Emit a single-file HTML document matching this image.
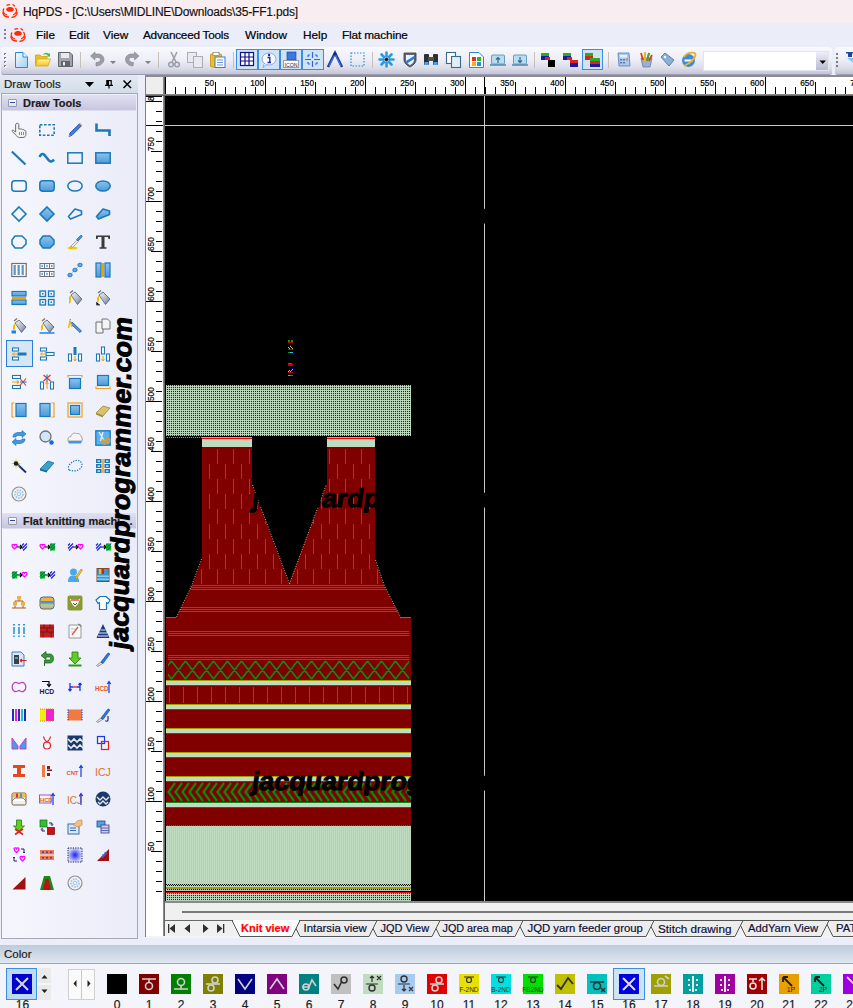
<!DOCTYPE html><html><head><meta charset="utf-8"><style>
html,body{margin:0;padding:0;width:853px;height:1008px;overflow:hidden;background:#ebedf9;font-family:"Liberation Sans",sans-serif;position:relative}
.ab{position:absolute;}
.t{position:absolute;white-space:nowrap;line-height:1;font-family:"Liberation Sans",sans-serif;-webkit-text-stroke:0.2px currentColor;}
svg{position:absolute;overflow:visible;}

</style></head><body>
<div class="ab" style="left:0;top:0;width:853px;height:23px;background:#f8eef2"></div>
<div class="t" style="left:23px;top:6px;font-size:12px;letter-spacing:-0.18px;color:#111;-webkit-text-stroke:0.15px #111">HqPDS - [C:\Users\MIDLINE\Downloads\35-FF1.pds]</div>
<svg class="ab" style="left:1px;top:4px" width="17" height="14"><path d="M5.5 4.5C7 2.5 11 2.5 12.5 4.5C13.5 6 12 7.8 9 7.8C6 7.8 4.5 6.2 5.5 4.5Z" fill="#ff2a00"/><path d="M3 4.5C1 7 2.5 10 6 11M14.5 4C16.5 6.5 15.5 9.5 12 11M2 8C1.5 11 4 13 8 13M16 8C16.5 11 14 13 10.5 13.5M5.5 1.5C6.5 0.8 8 0.5 9 0.8M11.5 0.5C12.5 1 13.5 1.5 14 2.5" stroke="#ff2a00" stroke-width="1.3" fill="none"/></svg>
<div class="ab" style="left:0;top:23px;width:853px;height:24px;background:#ebedf9"></div>
<div class="ab" style="left:10px;top:27px;width:15px;height:15px;background:#f0e8f2"></div>
<svg class="ab" style="left:9px;top:28px" width="17" height="14"><path d="M5.5 4.5C7 2.5 11 2.5 12.5 4.5C13.5 6 12 7.8 9 7.8C6 7.8 4.5 6.2 5.5 4.5Z" fill="#ff2a00"/><path d="M3 4.5C1 7 2.5 10 6 11M14.5 4C16.5 6.5 15.5 9.5 12 11M2 8C1.5 11 4 13 8 13M16 8C16.5 11 14 13 10.5 13.5M5.5 1.5C6.5 0.8 8 0.5 9 0.8M11.5 0.5C12.5 1 13.5 1.5 14 2.5" stroke="#ff2a00" stroke-width="1.3" fill="none"/></svg>
<svg class="ab" style="left:0;top:0" width="10" height="46"><g fill="#808090"><rect x="4" y="29" width="2" height="2"/><rect x="4" y="33" width="2" height="2"/><rect x="4" y="37" width="2" height="2"/></g></svg>
<div class="t" style="left:36px;top:30px;font-size:11.8px;letter-spacing:0px;color:#000;-webkit-text-stroke:0.2px #000">File</div>
<div class="t" style="left:69px;top:30px;font-size:11.8px;letter-spacing:0px;color:#000;-webkit-text-stroke:0.2px #000">Edit</div>
<div class="t" style="left:103px;top:30px;font-size:11.8px;letter-spacing:0px;color:#000;-webkit-text-stroke:0.2px #000">View</div>
<div class="t" style="left:143px;top:30px;font-size:11.8px;letter-spacing:-0.25px;color:#000;-webkit-text-stroke:0.2px #000">Advanceed Tools</div>
<div class="t" style="left:245px;top:30px;font-size:11.8px;letter-spacing:0px;color:#000;-webkit-text-stroke:0.2px #000">Window</div>
<div class="t" style="left:303px;top:30px;font-size:11.8px;letter-spacing:0px;color:#000;-webkit-text-stroke:0.2px #000">Help</div>
<div class="t" style="left:342px;top:30px;font-size:11.8px;letter-spacing:-0.15px;color:#000;-webkit-text-stroke:0.2px #000">Flat machine</div>
<div class="ab" style="left:1px;top:47px;width:831px;height:27px;border-radius:3px;background:linear-gradient(#f8f9fd,#eeeff7 45%,#dcdde9 78%,#c3c4d7);border-bottom:1px solid #9c9db4"></div>
<div class="ab" style="left:703px;top:51px;width:126px;height:20px;background:#fff;border:1px solid #e4e4ee;box-sizing:border-box"></div>
<div class="ab" style="left:835px;top:47px;width:18px;height:27px;border-radius:3px 0 0 3px;background:linear-gradient(#f8f9fd,#eeeff7 45%,#dcdde9 78%,#c3c4d7);border-bottom:1px solid #9c9db4"></div>
<svg class="ab" style="left:0;top:0" width="853" height="80">
<defs>
<linearGradient id="lf" x1="0" y1="0" x2="0" y2="1"><stop offset="0" stop-color="#8cc4ee"/><stop offset="1" stop-color="#4b9ada"/></linearGradient>
<linearGradient id="gb" x1="0" y1="0" x2="1" y2="1"><stop offset="0" stop-color="#f0f4f8"/><stop offset="0.6" stop-color="#a8b4c4"/><stop offset="1" stop-color="#5a6a80"/></linearGradient>
<radialGradient id="rg"><stop offset="0" stop-color="#2020f0"/><stop offset="1" stop-color="#d0d8f8"/></radialGradient>
</defs>
<defs>
<linearGradient id="doc" x1="0" y1="0" x2="1" y2="1"><stop offset="0" stop-color="#f4fbff"/><stop offset="1" stop-color="#9fd0f4"/></linearGradient>
<linearGradient id="ddb" x1="0" y1="0" x2="0" y2="1"><stop offset="0" stop-color="#eceef8"/><stop offset="1" stop-color="#b8bad0"/></linearGradient>
<linearGradient id="fold" x1="0" y1="0" x2="0" y2="1"><stop offset="0" stop-color="#fff6a0"/><stop offset="1" stop-color="#f0c020"/></linearGradient>
</defs>
<g fill="#7a7a8a"><rect x="4" y="53" width="2" height="2"/><rect x="4" y="57" width="2" height="2"/><rect x="4" y="61" width="2" height="2"/><rect x="4" y="65" width="2" height="2"/></g>
<g fill="#fff"><rect x="5" y="54" width="1.5" height="1.5"/><rect x="5" y="58" width="1.5" height="1.5"/><rect x="5" y="62" width="1.5" height="1.5"/><rect x="5" y="66" width="1.5" height="1.5"/></g>
<g fill="#7a7a8a"><rect x="836" y="53" width="2" height="2"/><rect x="836" y="57" width="2" height="2"/><rect x="836" y="61" width="2" height="2"/><rect x="836" y="65" width="2" height="2"/></g>
<g transform="translate(15,52)"><path d="M0.5 0.5H8L12.5 5V15.5H0.5Z" fill="url(#doc)" stroke="#2a8ad8" stroke-width="1"/><path d="M8 0.5V5H12.5" fill="#fff" stroke="#2a8ad8" stroke-width="1"/></g>
<g transform="translate(35,52)"><path d="M0.5 3H5L6.5 4.5H12V13H0.5Z" fill="#f0c020" stroke="#d0a010" stroke-width="0.8"/><path d="M2.5 7H15.5L13 14H0.5Z" fill="url(#fold)" stroke="#d8a810" stroke-width="0.8"/><path d="M8 3C9 0.5 12 0 14 2L15 0.8V4.5H11.5L12.8 3.3C11.5 2 9.5 2 8 3Z" fill="#40c040"/></g>
<g transform="translate(58,52)"><path d="M0.5 0.5H12L14.5 3V14.5H0.5Z" fill="#a0a4ac" stroke="#60646c" stroke-width="1"/><rect x="3" y="1" width="8" height="5" fill="#e8eaee"/><rect x="3" y="9" width="9" height="5.5" fill="#60646c"/><rect x="5" y="10" width="2" height="3.5" fill="#e8eaee"/></g>
<rect x="80" y="52" width="1" height="16" fill="#c8c0b8"/>
<g transform="translate(90,52)"><path d="M6 14C10 14 14 11 14 7.5C14 4 11 2 8 2H5V0L0.5 4L5 8V5.5H8C9.5 5.5 10.5 6.5 10.5 7.5C10.5 9 9 10.5 6 10.5Z" fill="#9a9ea8" stroke="#80848c" stroke-width="0.6"/></g>
<path d="M110 61H116L113 64Z M145 61H151L148 64Z" fill="#808080"/>
<g transform="translate(125,52)"><path d="M8 14C4 14 0.5 11 0.5 7.5C0.5 4 3.5 2 6.5 2H9.5V0L14 4L9.5 8V5.5H6.5C5 5.5 4 6.5 4 7.5C4 9 5.5 10.5 8.5 10.5Z" fill="#9a9ea8" stroke="#80848c" stroke-width="0.6"/></g>
<rect x="158" y="52" width="1" height="16" fill="#c8c0b8"/>
<g transform="translate(168,52)"><path d="M3 0L8 10M9 0L4 10" stroke="#9a9ea8" stroke-width="1.6"/><circle cx="3" cy="12.5" r="2.3" fill="none" stroke="#9a9ea8" stroke-width="1.5"/><circle cx="9" cy="12.5" r="2.3" fill="none" stroke="#9a9ea8" stroke-width="1.5"/></g>
<g transform="translate(187,52)"><rect x="0.5" y="0.5" width="9" height="10" fill="#e8eaee" stroke="#a8acb4"/><rect x="6.5" y="4.5" width="9" height="11" fill="#e8eaee" stroke="#a8acb4"/></g>
<g transform="translate(210,52)"><rect x="0.5" y="2" width="11" height="13" rx="1" fill="#f0c020" stroke="#c09010" stroke-width="0.8"/><rect x="3" y="0.5" width="6" height="3" fill="#fff" stroke="#808080" stroke-width="0.7"/><rect x="5" y="5" width="10" height="10.5" fill="#fff" stroke="#3a7ad0" stroke-width="1"/><path d="M7 8H13M7 10.5H13M7 13H13" stroke="#3a7ad0" stroke-width="0.8"/></g>
<rect x="233" y="52" width="1" height="16" fill="#c8c0b8"/>
<rect x="236.5" y="49.5" width="21" height="20" fill="#cfe3f5" stroke="#3a8ee0" stroke-width="1"/>
<rect x="258.5" y="49.5" width="21" height="20" fill="#cfe3f5" stroke="#3a8ee0" stroke-width="1"/>
<rect x="280.5" y="49.5" width="21" height="20" fill="#cfe3f5" stroke="#3a8ee0" stroke-width="1"/>
<rect x="302.5" y="49.5" width="21" height="20" fill="#cfe3f5" stroke="#3a8ee0" stroke-width="1"/>
<g transform="translate(240,52)"><rect x="0.5" y="0.5" width="13" height="13" fill="#fff" stroke="#10108a" stroke-width="1.2"/><path d="M5 0.5V13.5M9 0.5V13.5M0.5 5H13.5M0.5 9H13.5" stroke="#10108a" stroke-width="1.2"/></g>
<g transform="translate(261,52)"><ellipse cx="8" cy="7" rx="7" ry="6" fill="#f8f8ff" stroke="#7a9ad0" stroke-width="0.8"/><path d="M3 12L2 15.5L6 12.5" fill="#e8f0ff" stroke="#7a9ad0" stroke-width="0.7"/><circle cx="8" cy="3" r="1.2" fill="#1a2aa0"/><path d="M6.5 5.5H8.8V10.5H10M6.5 10.5H10" stroke="#1a2aa0" stroke-width="1.4" fill="none"/></g>
<g transform="translate(283,52)"><rect x="4" y="0" width="9" height="8" fill="#3a7ae0" stroke="#1a3a90" stroke-width="0.6"/><rect x="0.5" y="8.5" width="15" height="7" fill="#fff" stroke="#202040" stroke-width="0.8" stroke-dasharray="1 1"/><text x="1.5" y="14.5" font-size="5.2" font-weight="normal" fill="#202040" font-family="Liberation Sans">ICON</text></g>
<g transform="translate(305,52)"><path d="M7.5 0V6M7.5 9V15M0 7.5H6M9 7.5H15M3 3H5M10 3H12M3 12H5M10 12H12M3 3V5M12 3V5M3 10V12M12 10V12" stroke="#2a6ae0" stroke-width="1.2" fill="none"/></g>
<g transform="translate(327,52)"><path d="M1 15L8 1L15 15" stroke="#1a3aa0" stroke-width="2.6" fill="none"/><path d="M2 14L8 2L14 14" stroke="#4a8af0" stroke-width="0.9" fill="none"/><circle cx="8" cy="2" r="1.6" fill="#1a2a70"/></g>
<g transform="translate(350,52)"><rect x="1" y="1" width="13" height="13" fill="none" stroke="#2a8ae0" stroke-width="1.2" stroke-dasharray="1.5 1.5"/></g>
<rect x="372" y="52" width="1" height="16" fill="#c8c0b8"/>
<g transform="translate(379,52)"><g stroke="#2a9ae0" stroke-width="2.6" stroke-linecap="round"><path d="M7.5 0.5V4.5M7.5 10.5V14.5M0.5 7.5H4.5M10.5 7.5H14.5M2.5 2.5L5 5M10 10L12.5 12.5M12.5 2.5L10 5M5 10L2.5 12.5"/></g><circle cx="7.5" cy="7.5" r="1.8" fill="#202020"/></g>
<g transform="translate(403,52)"><path d="M1 1H13V8C13 12 7 15 7 15C7 15 1 12 1 8Z" fill="#5a6a80" stroke="#303848" stroke-width="0.8"/><path d="M3 3H11V8C11 11 7 13 7 13C7 13 3 11 3 8Z" fill="#f0f4f8"/><path d="M3 9L11 4V7L4 11.5Z" fill="#2a7ae0"/></g>
<g transform="translate(424,52)"><rect x="0" y="2" width="5" height="11" rx="1" fill="#303030"/><rect x="9" y="2" width="5" height="11" rx="1" fill="#303030"/><rect x="4" y="5" width="6" height="4" fill="#505050"/><rect x="0.5" y="10" width="4" height="3" fill="#4aa0f0"/><rect x="9.5" y="10" width="4" height="3" fill="#4aa0f0"/></g>
<g transform="translate(446,52)"><rect x="0.5" y="0.5" width="9" height="11" fill="#fff" stroke="#3a6a90" stroke-width="1.1"/><rect x="5.5" y="4.5" width="9" height="11" fill="#e0eef8" stroke="#3a6a90" stroke-width="1.1"/></g>
<g transform="translate(469,52)"><path d="M0.5 0.5H10L14.5 5V15.5H0.5Z" fill="#fff" stroke="#2a8ad8" stroke-width="1"/><rect x="3" y="5" width="4" height="4" fill="#e03020"/><rect x="8" y="5" width="4" height="4" fill="#30b030"/><rect x="3" y="10" width="4" height="4" fill="#f0b020"/><rect x="8" y="10" width="4" height="4" fill="#2a8ae0"/></g>
<g transform="translate(490,52)"><rect x="1.5" y="3" width="13" height="9" rx="1" fill="#b8dcf0" stroke="#4a8ab0" stroke-width="0.8"/><path d="M0 13H16" stroke="#4a8ab0" stroke-width="1.5"/><path d="M8 11V5.5M6 7.5L8 5.5L10 7.5" stroke="#2a6a90" stroke-width="1.2" fill="none"/></g>
<g transform="translate(512,52)"><rect x="1.5" y="3" width="13" height="9" rx="1" fill="#b8dcf0" stroke="#4a8ab0" stroke-width="0.8"/><path d="M0 13H16" stroke="#4a8ab0" stroke-width="1.5"/><path d="M8 5V10.5M6 8.5L8 10.5L10 8.5" stroke="#2a6a90" stroke-width="1.2" fill="none"/></g>
<rect x="534" y="52" width="1" height="16" fill="#c8c0b8"/>
<g transform="translate(541,52)"><rect x="0" y="1" width="8" height="3" fill="#20b020"/><rect x="0" y="4" width="8" height="4" fill="#1a1aa0"/><rect x="4" y="5" width="5" height="3" fill="#e02020"/><rect x="7" y="8" width="7" height="7" fill="#000"/></g>
<g transform="translate(563,52)"><rect x="0" y="1" width="8" height="3" fill="#20b020"/><rect x="0" y="4" width="8" height="4" fill="#1a1aa0"/><rect x="4" y="5" width="5" height="3" fill="#e02020"/><rect x="7" y="8" width="8" height="3" fill="#e02020"/><rect x="7" y="11" width="8" height="4" fill="#1a1aa0"/></g>
<rect x="582.5" y="49.5" width="20" height="20" fill="#cfe3f5" stroke="#3a8ee0" stroke-width="1"/>
<g transform="translate(585,52)"><rect x="0" y="1" width="8" height="3" fill="#20b020"/><rect x="0" y="4" width="8" height="4" fill="#e02020"/><rect x="5" y="6" width="10" height="3" fill="#20b020"/><rect x="5" y="9" width="10" height="3" fill="#e02020"/><rect x="5" y="12" width="10" height="3" fill="#1a1aa0"/></g>
<rect x="608" y="52" width="1" height="16" fill="#c8c0b8"/>
<g transform="translate(617,52)"><path d="M1 1H12L13 14H2Z" fill="#a8c8f0" stroke="#5a7ab0" stroke-width="0.8"/><rect x="3" y="3" width="7" height="2.5" fill="#e8f0ff"/><g fill="#5a7ab0"><rect x="3" y="7" width="2" height="1.5"/><rect x="6" y="7" width="2" height="1.5"/><rect x="3" y="10" width="2" height="1.5"/><rect x="6" y="10" width="2" height="1.5"/></g><rect x="9" y="6.5" width="2" height="2" fill="#f08020"/></g>
<g transform="translate(639,52)"><path d="M2 6L4 15H11L13 6Z" fill="#9ab0d0" stroke="#5a70a0" stroke-width="0.7"/><path d="M4 8L2 1M6 9L6 0.5M8 9L10 1M10 9L13 3" stroke-width="1.8" stroke="#e04020"/><path d="M6 9L6 0.5" stroke="#f0c020" stroke-width="1.8"/><path d="M8 9L10 1" stroke="#30b030" stroke-width="1.8"/></g>
<g transform="translate(660,52)"><path d="M1 5L5 1L14 8L9 14Z" fill="#8ab0d8" stroke="#4a6a98" stroke-width="0.8"/><circle cx="5" cy="5" r="1.2" fill="#fff"/></g>
<g transform="translate(680,52)"><circle cx="8.5" cy="8.5" r="6.5" fill="#3a8ae0"/><path d="M4.5 8.5H12.5" stroke="#fff" stroke-width="2"/><path d="M4 5C7 0 16 -1 15.5 3C15 6 11 11 4 14" stroke="#f0b020" stroke-width="1.8" fill="none"/></g>
<rect x="816" y="52" width="12" height="18" fill="url(#ddb)"/><path d="M819.5 60.5H826L822.7 64Z" fill="#000"/>
<g transform="translate(846,52)"><rect x="0" y="0" width="8" height="1.5" fill="#1a4aa0"/><rect x="2" y="1" width="4" height="4" fill="#1a4aa0"/><path d="M1 6L10 6L10 13Z" fill="#8ac4f4"/></g>
</svg>
<div class="ab" style="left:0;top:75px;width:138px;height:18px;background:linear-gradient(#e2e9f1,#d3dde8)"></div>
<div class="t" style="left:4px;top:79px;font-size:11.5px;color:#1b1b1b">Draw Tools</div>
<svg class="ab" style="left:0;top:0" width="140" height="100"><path d="M85 82H94L89.5 87Z" fill="#000"/><path d="M106.8 80.5V85M111.2 80.5V85M105 85.3H113M109 85.3V88.5M106.2 80.6H111.8" stroke="#000" stroke-width="1.2" fill="none"/><rect x="107" y="81" width="2" height="4" fill="#000"/><path d="M123.5 80.5L131 88M131 80.5L123.5 88" stroke="#000" stroke-width="1.5"/></svg>
<div class="ab" style="left:1px;top:93px;width:137px;height:846px;box-sizing:border-box;border:1px solid #a8a8b4;background:linear-gradient(90deg,#f5f6fd,#eaecf8)"></div>
<div class="ab" style="left:2px;top:95px;width:134px;height:15px;background:linear-gradient(#e0e0f1,#c6c7df)"></div>
<div class="ab" style="left:3px;top:110px;width:133px;height:1px;background:#dcdcee"></div>
<div class="ab" style="left:8px;top:99px;width:9px;height:8px;box-sizing:border-box;border:1px solid #9a9aaa;background:linear-gradient(#fff,#e0e0e8);border-radius:1px"></div>
<div class="ab" style="left:10px;top:102px;width:5px;height:1px;background:#2a4a9a"></div>
<div class="t" style="left:23px;top:98px;font-size:11px;font-weight:bold;color:#1b1b1b">Draw Tools</div>
<div class="ab" style="left:2px;top:513px;width:134px;height:15px;background:linear-gradient(#e0e0f1,#c6c7df)"></div>
<div class="ab" style="left:3px;top:528px;width:133px;height:1px;background:#dcdcee"></div>
<div class="ab" style="left:8px;top:517px;width:9px;height:8px;box-sizing:border-box;border:1px solid #9a9aaa;background:linear-gradient(#fff,#e0e0e8);border-radius:1px"></div>
<div class="ab" style="left:10px;top:520px;width:5px;height:1px;background:#2a4a9a"></div>
<div class="t" style="left:23px;top:516px;font-size:11px;font-weight:bold;color:#1b1b1b">Flat knitting machi<span style="letter-spacing:1.6px">...</span></div>
<svg class="ab" style="left:0;top:0" width="140" height="940">
<defs>
<linearGradient id="lf" x1="0" y1="0" x2="0" y2="1"><stop offset="0" stop-color="#8cc4ee"/><stop offset="1" stop-color="#4b9ada"/></linearGradient>
<linearGradient id="gb" x1="0" y1="0" x2="1" y2="1"><stop offset="0" stop-color="#f0f4f8"/><stop offset="0.6" stop-color="#a8b4c4"/><stop offset="1" stop-color="#5a6a80"/></linearGradient>
<radialGradient id="rg"><stop offset="0" stop-color="#2020f0"/><stop offset="1" stop-color="#d0d8f8"/></radialGradient>
</defs>
<rect x="6.5" y="340.5" width="26" height="26" fill="#d6e6f4" stroke="#2a80d8" stroke-width="1"/>
<g transform="translate(11,122)"><path d="M6 1.5C7 1 7.8 1.5 7.8 2.5V7L9.5 7C10.5 6.8 11 7 11.3 7.6C12.3 7.3 13 7.6 13.2 8.3C14.3 8.2 14.9 8.8 14.9 9.8V12.5C14.9 14.2 13.8 15.5 12 15.5H8.5C7.3 15.5 6.5 14.8 5.8 14L1.2 9.5C0.6 8.8 1.2 7.8 2.2 8.2L4.6 10V2.5C4.6 1.8 5.2 1.5 6 1.5Z" fill="#f2f2f2" stroke="#6e6e6e" stroke-width="1"/><path d="M8.5 10V13M10.5 10V13M12.5 10V13" stroke="#808080" stroke-width="0.9"/></g>
<g transform="translate(39,122)"><rect x="0.8" y="2.8" width="14.4" height="10.4" stroke="#1b78b9" stroke-width="1.6" fill="none" stroke-dasharray="2.6 1.6"/></g>
<g transform="translate(67,122)"><path d="M2 14.5L3 11L12.5 1.8L14.5 3.8L5 13.3Z" fill="#3d7fe0" stroke="#1a3f9a" stroke-width="0.8"/><path d="M12.5 1.8L14.5 3.8L15.2 3L13.2 1Z" fill="#f3c020"/><path d="M2 14.5L2.6 12.3L3.8 13.5Z" fill="#f0b030"/></g>
<g transform="translate(95,122)"><path d="M1.5 1.5V8.5H14.5V14" stroke="#1b78b9" stroke-width="2.6" fill="none"/></g>
<g transform="translate(11,150)"><path d="M0.8 1.5L14.5 14.5" stroke="#1b78b9" stroke-width="2.2" fill="none"/></g>
<g transform="translate(39,150)"><path d="M0.5 7C2 4 3.5 3 5.5 5L9.5 10C11.5 12.5 13.5 11.5 15 9.5" stroke="#1b78b9" stroke-width="2.6" fill="none"/></g>
<g transform="translate(67,150)"><rect x="0.8" y="2.8" width="14.4" height="10.4" stroke="#1b78b9" stroke-width="1.5" fill="none"/></g>
<g transform="translate(95,150)"><rect x="0.8" y="2.8" width="14.4" height="10.4" fill="url(#lf)" stroke="#1b78b9" stroke-width="1.5" /></g>
<g transform="translate(11,178)"><rect x="0.8" y="2.8" width="14.4" height="10.4" rx="3" stroke="#1b78b9" stroke-width="1.5" fill="none"/></g>
<g transform="translate(39,178)"><rect x="0.8" y="2.8" width="14.4" height="10.4" rx="3" fill="url(#lf)" stroke="#1b78b9" stroke-width="1.5"/></g>
<g transform="translate(67,178)"><ellipse cx="8" cy="8" rx="7.2" ry="5" stroke="#1b78b9" stroke-width="1.5" fill="none"/></g>
<g transform="translate(95,178)"><ellipse cx="8" cy="8" rx="7.2" ry="5" fill="url(#lf)" stroke="#1b78b9" stroke-width="1.5"/></g>
<g transform="translate(11,206)"><path d="M8 1L15 8L8 15L1 8Z" stroke="#1b78b9" stroke-width="1.6" fill="none"/></g>
<g transform="translate(39,206)"><path d="M8 1L15 8L8 15L1 8Z" fill="url(#lf)" stroke="#1b78b9" stroke-width="1.6"/></g>
<g transform="translate(67,206)"><path d="M1.5 10.5L8 3L14.5 5L14.5 8.5L3.5 13Z" stroke="#1b78b9" stroke-width="1.6" fill="none" stroke-linejoin="round"/></g>
<g transform="translate(95,206)"><path d="M1.5 10.5L8 3L14.5 5L14.5 8.5L3.5 13Z" fill="url(#lf)" stroke="#1b78b9" stroke-width="1.6" stroke-linejoin="round"/></g>
<g transform="translate(11,234)"><path d="M4 2H11L15 6V10L11 14H4L1 10V6Z" stroke="#1b78b9" stroke-width="1.5" fill="none" stroke-linejoin="round"/></g>
<g transform="translate(39,234)"><path d="M4 2H11L15 6V10L11 14H4L1 10V6Z" fill="url(#lf)" stroke="#1b78b9" stroke-width="1.5" stroke-linejoin="round"/></g>
<g transform="translate(67,234)"><ellipse cx="5.5" cy="14" rx="5" ry="1.5" fill="#f5d000"/><path d="M3 13L10 6L11.5 7.5L4.5 14.5Z" fill="#e8e8e8" stroke="#909090" stroke-width="0.7"/><path d="M3 13L5 11.5L4.5 14.5Z" fill="#f0a000"/><path d="M9.5 5.5L13.5 1.5C14.5 1 15.5 2 15 3L11 7Z" fill="#4a90e0" stroke="#2060b0" stroke-width="0.7"/></g>
<g transform="translate(95,234)"><path d="M1 1.5H15V5H13.5L13 3H9.5V13.3H11.5V14.8H4.5V13.3H6.5V3H3L2.5 5H1Z" fill="#3a3a3a"/></g>
<g transform="translate(11,262)"><rect x="0.8" y="1.5" width="14.4" height="13" fill="#fff" stroke="#707070" stroke-width="1.2"/><path d="M4 3V13M8 3V13M12 3V13" stroke="#3fa0f0" stroke-width="1.6"/><path d="M3 3V13M7 3V13M11 3V13" stroke="#505050" stroke-width="0.6"/></g>
<g transform="translate(39,262)"><rect x="1" y="1.5" width="14" height="5" fill="#fff" stroke="#707070" stroke-width="1"/><rect x="1" y="9.5" width="14" height="5" fill="#fff" stroke="#707070" stroke-width="1"/><path d="M5.5 1.5V6.5M10.5 1.5V6.5M5.5 9.5V14.5M10.5 9.5V14.5" stroke="#707070" stroke-width="1"/><path d="M3.2 2.8V5.2M8 2.8V5.2M12.8 2.8V5.2M3.2 10.8V13.2M8 10.8V13.2M12.8 10.8V13.2" stroke="#2a8ae0" stroke-width="1.2"/></g>
<g transform="translate(67,262)"><path d="M1.5 14L14.5 1.5" stroke="#3a88d8" stroke-width="1" stroke-dasharray="1.5 4"/><ellipse cx="3" cy="13" rx="2.2" ry="1.8" fill="#5aa8f0" stroke="#1a68b8" stroke-width="0.8"/><ellipse cx="8" cy="8" rx="2.2" ry="1.8" fill="#5aa8f0" stroke="#1a68b8" stroke-width="0.8"/><ellipse cx="13" cy="3" rx="2.2" ry="1.8" fill="#5aa8f0" stroke="#1a68b8" stroke-width="0.8"/></g>
<g transform="translate(95,262)"><rect x="1" y="1" width="5" height="14" fill="url(#lf)" stroke="#1b78b9" stroke-width="1.2"/><rect x="10" y="1" width="5" height="14" fill="url(#lf)" stroke="#1b78b9" stroke-width="1.2"/><rect x="7" y="1" width="2" height="14" fill="#f0a000"/></g>
<g transform="translate(11,290)"><rect x="1" y="1.5" width="14" height="4.5" fill="url(#lf)" stroke="#1b78b9" stroke-width="1.2"/><rect x="1" y="10" width="14" height="4.5" fill="url(#lf)" stroke="#1b78b9" stroke-width="1.2"/><rect x="1" y="7" width="14" height="2" fill="#f0a000"/></g>
<g transform="translate(39,290)"><rect x="1" y="1" width="5.5" height="5.5" fill="none" stroke="#1b78b9" stroke-width="1.3"/><rect x="9.5" y="1" width="5.5" height="5.5" fill="none" stroke="#1b78b9" stroke-width="1.3"/><rect x="1" y="9.5" width="5.5" height="5.5" fill="none" stroke="#1b78b9" stroke-width="1.3"/><rect x="9.5" y="9.5" width="5.5" height="5.5" fill="none" stroke="#1b78b9" stroke-width="1.3"/><rect x="3" y="3" width="1.5" height="1.5" fill="#1b78b9"/><rect x="11.5" y="3" width="1.5" height="1.5" fill="#1b78b9"/><rect x="3" y="11.5" width="1.5" height="1.5" fill="#1b78b9"/><rect x="11.5" y="11.5" width="1.5" height="1.5" fill="#1b78b9"/></g>
<g transform="translate(67,290)"><path d="M3 3L6 0.5" stroke="#707070" stroke-width="1.2"/><path d="M4 5L8 2L15 9L10.5 14.5Z" fill="url(#gb)" stroke="#4a5a70" stroke-width="0.8"/><path d="M4 5L2 7V14L4 12Z" fill="#f0c000"/></g>
<g transform="translate(95,290)"><path d="M3 3L6 0.5" stroke="#707070" stroke-width="1.2"/><path d="M4 5L8 2L15 9L10.5 14.5Z" fill="url(#gb)" stroke="#4a5a70" stroke-width="0.8"/><path d="M4 5L2 8V13L4 11Z" fill="#f0c000"/><path d="M1.5 12V15H5" stroke="#505050" stroke-width="1"/></g>
<g transform="translate(11,318)"><path d="M3 3L6 0.5" stroke="#707070" stroke-width="1.2"/><path d="M4 5L8 2L15 9L10.5 14.5Z" fill="url(#gb)" stroke="#4a5a70" stroke-width="0.8"/><path d="M4 5L2 8V13L4 11Z" fill="#f0c000"/><rect x="0.5" y="12.5" width="4.5" height="3" fill="#2080f0"/></g>
<g transform="translate(39,318)"><path d="M3 3L6 0.5" stroke="#707070" stroke-width="1.2"/><path d="M4 5L8 2L15 9L10.5 14.5Z" fill="url(#gb)" stroke="#4a5a70" stroke-width="0.8"/><path d="M4 5L2 8V13L4 11Z" fill="#f0c000"/><path d="M0.5 15H15.5" stroke="#2080f0" stroke-width="1.5"/></g>
<g transform="translate(67,318)"><path d="M5 4L14.5 13L13 14.5L3.5 5.5Z" fill="#4a9ae8" stroke="#1a4aa0" stroke-width="0.8"/><path d="M3 3L5 9M3 3L1.5 10" stroke="#f0c000" stroke-width="1.5"/><path d="M2.5 2L4 1.5" stroke="#707070"/></g>
<g transform="translate(95,318)"><path d="M1 4H6L8 6V15H1Z" fill="#f4f4f4" stroke="#707070" stroke-width="1"/><path d="M7 1H12.5L15 3.5V11H7Z" fill="#f4f4f4" stroke="#707070" stroke-width="1"/></g>
<g transform="translate(11,346)"><rect x="1.5" y="2" width="6" height="3" fill="#fff" stroke="#1b78b9" stroke-width="1.1"/><rect x="6.5" y="6.5" width="9" height="3" fill="#1b78b9"/><rect x="1.5" y="11" width="6" height="3" fill="#fff" stroke="#1b78b9" stroke-width="1.1"/><path d="M1.5 8H6M1.5 8L3.5 6.5M1.5 8L3.5 9.5" stroke="#f0a020" stroke-width="1"/></g>
<g transform="translate(39,346)"><rect x="1.5" y="2" width="6" height="3" fill="#fff" stroke="#1b78b9" stroke-width="1.1"/><rect x="7" y="6.5" width="8" height="3" fill="#fff" stroke="#1b78b9" stroke-width="1.1"/><rect x="1.5" y="11" width="6" height="3" fill="#fff" stroke="#1b78b9" stroke-width="1.1"/><path d="M1.5 8H6M1.5 8L3.5 6.5M1.5 8L3.5 9.5" stroke="#f0a020" stroke-width="1"/></g>
<g transform="translate(67,346)"><rect x="1.5" y="8" width="3" height="7" fill="#fff" stroke="#1b78b9" stroke-width="1.1"/><rect x="6.5" y="1" width="3" height="8" fill="#1b78b9"/><rect x="11.5" y="8" width="3" height="7" fill="#fff" stroke="#1b78b9" stroke-width="1.1"/><path d="M8 10V15M8 15L6.5 13M8 15L9.5 13" stroke="#f0a020" stroke-width="1"/></g>
<g transform="translate(95,346)"><rect x="1.5" y="8" width="3" height="7" fill="#fff" stroke="#1b78b9" stroke-width="1.1"/><rect x="6.5" y="1" width="3" height="7" fill="#fff" stroke="#1b78b9" stroke-width="1.1"/><rect x="11.5" y="8" width="3" height="7" fill="#fff" stroke="#1b78b9" stroke-width="1.1"/><path d="M8 10V15M8 15L6.5 13M8 15L9.5 13" stroke="#f0a020" stroke-width="1"/></g>
<g transform="translate(11,374)"><rect x="1.5" y="1.5" width="8" height="3" fill="#fff" stroke="#1b78b9" stroke-width="1.1"/><rect x="1.5" y="11.5" width="8" height="3" fill="#fff" stroke="#1b78b9" stroke-width="1.1"/><path d="M1 8H8M8 8L6 6.5M8 8L6 9.5" stroke="#f0a020" stroke-width="1.1"/><path d="M9 4.5L15 11.5M15 4.5L9 11.5" stroke="#e03030" stroke-width="1.1"/><path d="M9 8H15.5" stroke="#1b78b9" stroke-width="1.1"/></g>
<g transform="translate(39,374)"><rect x="1.5" y="8" width="3" height="7" fill="#fff" stroke="#1b78b9" stroke-width="1.1"/><rect x="11.5" y="8" width="3" height="7" fill="#fff" stroke="#1b78b9" stroke-width="1.1"/><path d="M8 8V15M8 8L6.5 10M8 8L9.5 10" stroke="#f0a020" stroke-width="1.1"/><path d="M4.5 1L11.5 7M11.5 1L4.5 7" stroke="#e03030" stroke-width="1.1"/><path d="M8 0.5V8" stroke="#1b78b9" stroke-width="1.1"/></g>
<g transform="translate(67,374)"><path d="M1 3.5V1.5H15V3.5" stroke="#f0a020" stroke-width="1.2" fill="none"/><rect x="2.5" y="4.5" width="11" height="10" fill="url(#lf)" stroke="#1b78b9" stroke-width="1.2"/></g>
<g transform="translate(95,374)"><rect x="2.5" y="1.5" width="11" height="10" fill="url(#lf)" stroke="#1b78b9" stroke-width="1.2"/><path d="M1 12.5V14.5H15V12.5" stroke="#f0a020" stroke-width="1.2" fill="none"/></g>
<g transform="translate(11,402)"><path d="M3.5 1H1V15H3.5" stroke="#f0a020" stroke-width="1.2" fill="none"/><rect x="5" y="1.5" width="10" height="13" fill="url(#lf)" stroke="#1b78b9" stroke-width="1.2"/></g>
<g transform="translate(39,402)"><rect x="1" y="1.5" width="10" height="13" fill="url(#lf)" stroke="#1b78b9" stroke-width="1.2"/><path d="M12.5 1H15V15H12.5" stroke="#f0a020" stroke-width="1.2" fill="none"/></g>
<g transform="translate(67,402)"><rect x="1" y="1" width="14" height="14" fill="none" stroke="#f0a020" stroke-width="1.2"/><rect x="3.5" y="3.5" width="9" height="9" fill="url(#lf)" stroke="#1b78b9" stroke-width="1.2"/></g>
<g transform="translate(95,402)"><path d="M1 11L8 4L15 6L8 14Z" fill="#d8c070" stroke="#a08830" stroke-width="0.8"/><path d="M1 11L8 14V15.5L1 12.5Z" fill="#a08830"/></g>
<g transform="translate(11,430)"><path d="M2 7C2 3.5 5 2.5 8 2.5H11V0.5L15 4L11 7.5V5.5H8C6 5.5 5 6 5 7Z" fill="#3a9ae8" stroke="#1a68c0" stroke-width="0.6"/><path d="M14 9C14 12.5 11 13.5 8 13.5H5V15.5L1 12L5 8.5V10.5H8C10 10.5 11 10 11 9Z" fill="#3a9ae8" stroke="#1a68c0" stroke-width="0.6"/></g>
<g transform="translate(39,430)"><circle cx="6.5" cy="6.5" r="5.5" fill="#cfe6fa" stroke="#707070" stroke-width="1.3"/><circle cx="12.5" cy="12.5" r="2.2" fill="#2060e0"/></g>
<g transform="translate(67,430)"><path d="M1 11C0.5 8 2 6.5 4 6.5C4.5 3.5 7 2.5 9.5 3.5C11.5 3 14 4.5 14.5 7C15.5 8 15.5 10 15 11Z" fill="#f4f4f4" stroke="#909090" stroke-width="0.8"/><path d="M1 11H15L14 13.5H2Z" fill="#3a9ae8"/></g>
<g transform="translate(95,430)"><rect x="0.8" y="0.8" width="14.4" height="14.4" fill="#5ab0f0" stroke="#1b78b9" stroke-width="1.3"/><path d="M4 2L9.5 11M8 2L5.5 11" stroke="#f0f0f0" stroke-width="1.3"/><circle cx="9.5" cy="12" r="2" fill="none" stroke="#e0a020" stroke-width="1.3"/><circle cx="13" cy="10.5" r="2" fill="none" stroke="#e0a020" stroke-width="1.3"/></g>
<g transform="translate(11,458)"><path d="M5.5 5.5L15 14.5" stroke="#1a2a70" stroke-width="1.8"/><path d="M5 1V10M0.5 5.5H9.5M2 2.5L8 8.5M8 2.5L2 8.5" stroke="#f0e000" stroke-width="1"/><circle cx="5" cy="5.5" r="2.2" fill="#202020"/></g>
<g transform="translate(39,458)"><path d="M1 11L9 3L15 5L8 13Z" fill="#3aa0d0" stroke="#1a70a0" stroke-width="0.8"/><path d="M1 11L8 13V14.5L1 12.5Z" fill="#1a6090"/></g>
<g transform="translate(67,458)"><path d="M2 12C0 9 3 4 9 2.5C12 1.5 15 4 15 7C15 11 9 14.5 2 12Z" stroke="#1a78b9" stroke-width="1.2" fill="none" stroke-dasharray="1.3 1.3"/></g>
<g transform="translate(95,458)"><g fill="#1b78b9"><rect x="1" y="1" width="5.5" height="4"/><rect x="9.5" y="1" width="5.5" height="4"/><rect x="1" y="6" width="5.5" height="4"/><rect x="9.5" y="6" width="5.5" height="4"/><rect x="1" y="11" width="5.5" height="4"/><rect x="9.5" y="11" width="5.5" height="4"/></g><g fill="#fff"><rect x="2.5" y="2.5" width="2.5" height="1.2"/><rect x="11" y="2.5" width="2.5" height="1.2"/><rect x="2.5" y="7.5" width="2.5" height="1.2"/><rect x="11" y="7.5" width="2.5" height="1.2"/><rect x="2.5" y="12.5" width="2.5" height="1.2"/><rect x="11" y="12.5" width="2.5" height="1.2"/></g><rect x="7.2" y="1" width="1.6" height="14" fill="#f0a020"/></g>
<g transform="translate(11,486)"><circle cx="8" cy="8" r="7" fill="#f2f2f2" stroke="#909090" stroke-width="1.2"/><circle cx="8" cy="8" r="4" fill="none" stroke="#9cc8ec" stroke-width="1.8" stroke-dasharray="1.6 1.1"/><circle cx="8" cy="8" r="1.8" fill="none" stroke="#9cc8ec" stroke-width="1"/></g>
<g transform="translate(11,539)"><path d="M1 6.5C1 5 3 5 3.5 6.2C4 5 6 5 6 6.5C6 8 3.5 10 3.5 10C3.5 10 1 8 1 6.5Z" fill="none" stroke="#ff00ff" stroke-width="1.2"/><path d="M6 8.0H11M9 6.0L11 8.0L9 10.0" stroke="#000" stroke-width="1.1" fill="none"/><path d="M11 6.5L13 4.5M11 9.5L16 4.5M12 11.5L16 7.5" stroke="#2020e0" stroke-width="1.2"/></g>
<g transform="translate(39,539)"><path d="M1 6.5C1 5 3 5 3.5 6.2C4 5 6 5 6 6.5C6 8 3.5 10 3.5 10C3.5 10 1 8 1 6.5Z" fill="none" stroke="#ff00ff" stroke-width="1.2"/><path d="M6 8.0H11M9 6.0L11 8.0L9 10.0" stroke="#000" stroke-width="1.1" fill="none"/><rect x="11" y="4.5" width="5" height="7" fill="#00d000"/><path d="M11 6.5L13 4.5M11 9.5L16 4.5M12 11.5L16 7.5" stroke="#2020e0" stroke-width="1"/></g>
<g transform="translate(67,539)"><path d="M1 6.5L3 4.5M1 9.5L6 4.5M2 11.5L6 7.5" stroke="#2020e0" stroke-width="1.2"/><path d="M6 8.0H11M9 6.0L11 8.0L9 10.0" stroke="#000" stroke-width="1.1" fill="none"/><path d="M11 6.5C11 5 13 5 13.5 6.2C14 5 16 5 16 6.5C16 8 13.5 10 13.5 10C13.5 10 11 8 11 6.5Z" fill="none" stroke="#ff00ff" stroke-width="1.2"/></g>
<g transform="translate(95,539)"><path d="M1 6.5L3 4.5M1 9.5L6 4.5M2 11.5L6 7.5" stroke="#2020e0" stroke-width="1.2"/><path d="M6 8.0H11M9 6.0L11 8.0L9 10.0" stroke="#000" stroke-width="1.1" fill="none"/><rect x="11" y="4.5" width="5" height="7" fill="#00d000"/><path d="M11 6.5L13 4.5M11 9.5L16 4.5M12 11.5L16 7.5" stroke="#2020e0" stroke-width="1"/></g>
<g transform="translate(11,567)"><rect x="1" y="4.5" width="5" height="7" fill="#00d000"/><path d="M1 6.5L3 4.5M1 9.5L6 4.5M2 11.5L6 7.5" stroke="#2020e0" stroke-width="1"/><path d="M6 8.0H11M9 6.0L11 8.0L9 10.0" stroke="#000" stroke-width="1.1" fill="none"/><path d="M11 6.5C11 5 13 5 13.5 6.2C14 5 16 5 16 6.5C16 8 13.5 10 13.5 10C13.5 10 11 8 11 6.5Z" fill="none" stroke="#ff00ff" stroke-width="1.2"/></g>
<g transform="translate(39,567)"><rect x="1" y="4.5" width="5" height="7" fill="#00d000"/><path d="M1 6.5L3 4.5M1 9.5L6 4.5M2 11.5L6 7.5" stroke="#2020e0" stroke-width="1"/><path d="M6 8.0H11M9 6.0L11 8.0L9 10.0" stroke="#000" stroke-width="1.1" fill="none"/><path d="M11 6.5L13 4.5M11 9.5L16 4.5M12 11.5L16 7.5" stroke="#2020e0" stroke-width="1.2"/></g>
<g transform="translate(67,567)"><circle cx="6.5" cy="5" r="3.5" fill="#4aa8f0"/><path d="M1 15C1 10 3 8.5 6.5 8.5C10 8.5 12 10 12 15Z" fill="#4aa8f0"/><path d="M8 11L14 2L15.5 3L9.5 12Z" fill="#f0c030" stroke="#a07010" stroke-width="0.5"/></g>
<g transform="translate(95,567)"><rect x="2" y="1.5" width="12" height="13" fill="#3a9ad0" stroke="#8a4a20" stroke-width="1"/><rect x="4" y="2" width="2" height="5" fill="#f0c000"/><rect x="7" y="2" width="2" height="5" fill="#d02020"/><rect x="2" y="8.5" width="12" height="1.5" fill="#8ac8f0"/><rect x="2" y="11.5" width="12" height="1.5" fill="#8ac8f0"/></g>
<g transform="translate(11,595)"><rect x="6" y="1" width="4" height="3.5" fill="#f0b040"/><rect x="2" y="7" width="4" height="3.5" fill="#f0b040"/><rect x="10" y="7" width="4" height="3.5" fill="#f0b040"/><path d="M8 4.5V6H4V7M8 6H12V7M1 13H15M4 10.5V13M12 10.5V13" stroke="#a06020" stroke-width="1" fill="none"/></g>
<g transform="translate(39,595)"><rect x="1" y="2" width="14" height="12" rx="3" fill="#f0b040" stroke="#4a6a90" stroke-width="1"/><rect x="1.5" y="6" width="13" height="2.5" fill="#3a9ad0"/><rect x="1.5" y="9.5" width="13" height="2" fill="#8ad0e0"/></g>
<g transform="translate(67,595)"><rect x="0.5" y="0.5" width="15" height="15" rx="2" fill="#8a9a30"/><path d="M3 4H13L11 9L8 12L5 9Z" fill="#fff"/><path d="M4 5H12" stroke="#d02020" stroke-width="1.2"/><path d="M6 8L8 10L10 8" stroke="#202020" stroke-width="0.8" fill="none"/></g>
<g transform="translate(95,595)"><path d="M1 5L5 1.5H11L15 5L13 8.5L11.5 7.5V14.5H4.5V7.5L3 8.5Z" fill="#fff" stroke="#1b78b9" stroke-width="1.2" stroke-linejoin="round"/></g>
<g transform="translate(11,623)"><path d="M3 4V14M8 4V14M13 4V14" stroke="#2a9ad0" stroke-width="1.6" stroke-dasharray="7 1.5"/><g fill="#2a9ad0"><rect x="2" y="1" width="2" height="1.5"/><rect x="7" y="1" width="2" height="1.5"/><rect x="12" y="1" width="2" height="1.5"/></g></g>
<g transform="translate(39,623)"><rect x="1" y="1.5" width="14" height="13" fill="#c02020"/><path d="M1 5H15M1 9H15M5 1.5V5M11 1.5V5M8 5V9M4 9V14.5M12 9V14.5" stroke="#701010" stroke-width="0.8"/></g>
<g transform="translate(67,623)"><path d="M2 2H12L14 4V15H2Z" fill="#f8f8f8" stroke="#909090" stroke-width="0.9"/><path d="M5 12L11 4" stroke="#d06030" stroke-width="1.3"/><path d="M4 6H9M4 9H8" stroke="#a0a0a0" stroke-width="0.6"/><path d="M11 1L14 2V4" stroke="#606060" stroke-width="0.8" fill="none"/></g>
<g transform="translate(95,623)"><path d="M8 1L14.5 15H1.5Z" fill="#1a3a80"/><path d="M4 10H12M5.5 7H10.5M3 13H13" stroke="#e8e8f0" stroke-width="1"/></g>
<g transform="translate(11,651)"><path d="M1 1H10L13 4V15H1Z" fill="#d8e8f8" stroke="#3a7ac0" stroke-width="1"/><rect x="3" y="4" width="5" height="9" fill="#404040"/><rect x="4" y="6" width="3" height="2" fill="#4a9ae0"/><path d="M9 9.5H15.5M9 9.5L11 8M9 9.5L11 11" stroke="#e02020" stroke-width="1.2"/></g>
<g transform="translate(39,651)"><path d="M5.5 15V12H11C13 12 14.5 10.5 14.5 7.5C14.5 4.5 13 3 11 3H7V0.5L2 4.5L7 8.5V6H10.5C11.3 6 11.5 6.5 11.5 7.5C11.5 8.5 11.3 9 10.5 9H5.5Z" fill="#3a9a3a" stroke="#1a5a1a" stroke-width="0.7"/></g>
<g transform="translate(67,651)"><path d="M5 1H11V7H14L8 13L2 7H5Z" fill="#60d020" stroke="#2a7a10" stroke-width="0.8"/><rect x="1.5" y="13.5" width="13" height="2" fill="#2a9a10"/></g>
<g transform="translate(95,651)"><path d="M1.5 14.5L6 11L7.5 12.5L3 15.5Z" fill="#e8e8e8" stroke="#707070" stroke-width="0.7"/><path d="M6 11L12.5 2.5C13.5 1.5 15 2.5 14.5 3.5L8 12.5Z" fill="#2a7ae0" stroke="#1a4aa0" stroke-width="0.7"/></g>
<g transform="translate(11,679)"><path d="M3 4C5 2 7 4.5 8 4.5C9 4.5 11 2 13 4C15.5 6 15.5 10 13 12C11 14 9 11.5 8 11.5C7 11.5 5 14 3 12C0.5 10 0.5 6 3 4Z" fill="none" stroke="#c040c0" stroke-width="1.3"/></g>
<g transform="translate(39,679)"><path d="M3 2.5H10V7M8 5L10 7.5L12 5" stroke="#000" stroke-width="1.2" fill="none"/><text x="0.5" y="15" font-size="6.8" font-weight="bold" fill="#0a1a6a" font-family="Liberation Sans">HCD</text></g>
<g transform="translate(67,679)"><path d="M3 4V12M13 4V12M3 8H6M10 8H13M3 12L1.5 10M3 12L4.5 10M13 4L11.5 6M13 4L14.5 6" stroke="#1a3ae0" stroke-width="1.3" fill="none"/><path d="M6 8H10" stroke="#e02020" stroke-width="1.3"/></g>
<g transform="translate(95,679)"><text x="0" y="11.5" font-size="6.3" font-weight="bold" fill="#e06020" font-family="Liberation Sans">HCD</text><path d="M14 14V3M12.3 5L14 2.5L15.7 5" stroke="#1a3ae0" stroke-width="1.2" fill="none"/></g>
<g transform="translate(11,707)"><g><rect x="1" y="2" width="2" height="12" fill="#2a2ab0"/><rect x="4" y="2" width="2" height="12" fill="#e020e0"/><rect x="7" y="2" width="2" height="12" fill="#2a2ab0"/><rect x="10" y="2" width="2" height="12" fill="#20c0e0"/><rect x="13" y="2" width="2" height="12" fill="#2a2ab0"/></g></g>
<g transform="translate(39,707)"><rect x="1" y="2" width="14" height="12" fill="#f0f000"/><rect x="7" y="2" width="8" height="12" fill="#f020d0"/><path d="M1 2H15M1 14H15" stroke="#e08020" stroke-width="1" stroke-dasharray="1 1"/></g>
<g transform="translate(67,707)"><rect x="1" y="2.5" width="14" height="11" fill="#f07a40"/><path d="M1 2.5V13.5M15 2.5V13.5" stroke="#2a4ae0" stroke-width="1.2" stroke-dasharray="1.2 1.2"/></g>
<g transform="translate(95,707)"><path d="M1.5 14.5L6 11L7.5 12.5L3 15.5Z" fill="#e8e8e8" stroke="#707070" stroke-width="0.7"/><path d="M6 11L12.5 2.5C13.5 1.5 15 2.5 14.5 3.5L8 12.5Z" fill="#2a7ae0" stroke="#1a4aa0" stroke-width="0.7"/><path d="M13 9V13C13 14.5 11 14.5 10.5 13.5" stroke="#0a1a8a" stroke-width="1.1" fill="none"/></g>
<g transform="translate(11,735)"><path d="M1 14V3L7 11V14Z" fill="#40a0f0" stroke="#c040c0" stroke-width="1"/><path d="M15 14V3L9 11V14Z" fill="#40a0f0" stroke="#c040c0" stroke-width="1"/></g>
<g transform="translate(39,735)"><circle cx="8" cy="10.5" r="3.5" fill="none" stroke="#e02020" stroke-width="1.2"/><path d="M4.5 1.5C5 5 7 6 8 7C9 6 11 5 11.5 1.5" stroke="#e02020" stroke-width="1.2" fill="none"/></g>
<g transform="translate(67,735)"><rect x="0.5" y="0.5" width="15" height="15" fill="#1a3a6a"/><path d="M1 4L4 7L7 4L10 7L13 4L16 7M1 10L4 13L7 10L10 13L13 10L16 13" stroke="#e8e8e8" stroke-width="1.6" fill="none"/></g>
<g transform="translate(95,735)"><rect x="2.5" y="1.5" width="7" height="7" fill="none" stroke="#1a3ae0" stroke-width="1.2"/><rect x="6.5" y="6.5" width="7" height="8" fill="none" stroke="#e02020" stroke-width="1.2"/></g>
<g transform="translate(11,763)"><path d="M2 2H14V5H10V11H14V14H2V11H6V5H2Z" fill="#e04a20"/></g>
<g transform="translate(39,763)"><rect x="3" y="2" width="3" height="12" fill="#f07a40"/><rect x="8" y="3" width="3" height="3" fill="#8a1a1a"/><rect x="8" y="10" width="3" height="3" fill="#8a1a1a"/><rect x="8" y="6.5" width="5" height="1.5" fill="#8a1a1a"/></g>
<g transform="translate(67,763)"><text x="-0.5" y="11.5" font-size="5.8" font-weight="bold" fill="#e06020" font-family="Liberation Sans">CNT</text><path d="M14 14V3M12.3 5L14 2.5L15.7 5" stroke="#1a3ae0" stroke-width="1.2" fill="none"/></g>
<g transform="translate(95,763)"><text x="0" y="13" font-size="10.5" font-weight="normal" fill="#e07030" font-family="Liberation Sans">ICJ</text></g>
<g transform="translate(11,791)"><rect x="1" y="2" width="14" height="12" rx="1.5" fill="#e8f0f8" stroke="#8a5a30" stroke-width="1"/><rect x="2" y="2.5" width="12" height="4" fill="#f0c040"/><rect x="5" y="2.5" width="2" height="4" fill="#e03030"/><rect x="9" y="2.5" width="2" height="4" fill="#3a9ad0"/><path d="M1 10L4 7H12L15 10" fill="#fff" stroke="#606060" stroke-width="0.8"/></g>
<g transform="translate(39,791)"><rect x="0.5" y="4" width="11.5" height="8" fill="none" stroke="#b040b0" stroke-width="0.9"/><text x="1" y="10.5" font-size="5.8" font-weight="bold" fill="#e06020" font-family="Liberation Sans">HCD</text><path d="M14 14V3M12.3 5L14 2.5L15.7 5" stroke="#1a3ae0" stroke-width="1.2" fill="none"/></g>
<g transform="translate(67,791)"><text x="0" y="13" font-size="10" font-weight="normal" fill="#e07030" font-family="Liberation Sans">ICJ</text><path d="M14 14V3M12.3 5L14 2.5L15.7 5" stroke="#1a3ae0" stroke-width="1.2" fill="none"/></g>
<g transform="translate(95,791)"><circle cx="8" cy="8" r="7.5" fill="#1a3a6a"/><path d="M2 6L5 9L8 6L11 9L14 6M3 11L5 13L8 10L11 13L13 11" stroke="#e8e8e8" stroke-width="1.4" fill="none"/></g>
<g transform="translate(11,819)"><path d="M5.5 1H10.5V7H13.5L8 12L2.5 7H5.5Z" fill="#60d020" stroke="#2a7a10" stroke-width="0.8"/><path d="M4 10L12 15.5M12 10L4 15.5" stroke="#e02020" stroke-width="1.6"/></g>
<g transform="translate(39,819)"><rect x="1" y="1" width="7" height="7" fill="#30c030" stroke="#1a6a1a" stroke-width="0.7"/><rect x="8.5" y="8.5" width="7" height="7" fill="#d01010" stroke="#700a0a" stroke-width="0.7"/><path d="M10 4H13V6.5M12 5.5L13 6.5L14 5.5M6 12H3V9.5M2 10.5L3 9.5L4 10.5" stroke="#202060" stroke-width="1" fill="none"/></g>
<g transform="translate(67,819)"><rect x="1" y="5" width="11" height="10" fill="#d8e8f8" stroke="#3a6ab0" stroke-width="1"/><path d="M3 9H9M3 11.5H9" stroke="#3a6ab0" stroke-width="1"/><path d="M6 6L11 1.5L15 1V6L11 8Z" fill="#f0c080" stroke="#c08040" stroke-width="0.6"/></g>
<g transform="translate(95,819)"><rect x="2" y="2" width="8" height="6" fill="#5aa0e0" stroke="#1a4aa0" stroke-width="0.8"/><rect x="6" y="6" width="8" height="8" fill="#e8c0e8" stroke="#1a4aa0" stroke-width="0.8"/><path d="M6 9H14M6 11.5H14" stroke="#1a4aa0" stroke-width="0.7"/></g>
<g transform="translate(11,847)"><path d="M3 2.0C3 0.5 5 0.5 5.5 1.7C6 0.5 8 0.5 8 2.0C8 3.5 5.5 5.5 5.5 5.5C5.5 5.5 3 3.5 3 2.0Z" fill="none" stroke="#ff00ff" stroke-width="1.2"/><path d="M9 10.5C9 9 11 9 11.5 10.2C12 9 14 9 14 10.5C14 12 11.5 14 11.5 14C11.5 14 9 12 9 10.5Z" fill="none" stroke="#ff00ff" stroke-width="1.2"/><path d="M10 2H13V6M12 5L13 6L14 5M6 14H3V10M2 11L3 10L4 11" stroke="#202060" stroke-width="1" fill="none"/></g>
<g transform="translate(39,847)"><rect x="1" y="3" width="14" height="10" fill="#f07a40"/><rect x="1" y="7.5" width="14" height="1" fill="#fff"/><g fill="#2a3ae0"><circle cx="4" cy="5.3" r="1"/><circle cx="8" cy="5.3" r="1"/><circle cx="12" cy="5.3" r="1"/><circle cx="4" cy="10.7" r="1"/><circle cx="8" cy="10.7" r="1"/><circle cx="12" cy="10.7" r="1"/></g></g>
<g transform="translate(67,847)"><rect x="1" y="1" width="14" height="14" fill="url(#rg)" stroke="#202040" stroke-width="1" stroke-dasharray="1.2 1.2"/></g>
<g transform="translate(95,847)"><path d="M2 14L14 2V14Z" fill="#a01010"/><path d="M6 10H8V8H10V6H12" stroke="#3a6ae0" stroke-width="1.3" fill="none"/></g>
<g transform="translate(11,875)"><path d="M1.5 14.5L14.5 2V14.5Z" fill="#a01010"/></g>
<g transform="translate(39,875)"><path d="M5 1H11L15 15H1Z" fill="#1a8a1a"/><path d="M6.5 4H9.5L12 15H4Z" fill="#c01010"/></g>
<g transform="translate(67,875)"><circle cx="8" cy="8" r="7" fill="#f2f2f2" stroke="#909090" stroke-width="1.2"/><circle cx="8" cy="8" r="4" fill="none" stroke="#9cc8ec" stroke-width="1.8" stroke-dasharray="1.6 1.1"/><circle cx="8" cy="8" r="1.8" fill="none" stroke="#9cc8ec" stroke-width="1"/></g>
</svg>
<div class="ab" style="left:145px;top:75px;width:708px;height:862px;background:#f0f0f0"></div>
<div class="ab" style="left:145px;top:75px;width:1px;height:862px;background:#808080"></div>
<div class="ab" style="left:145px;top:75px;width:708px;height:2px;background:#8c8c8c"></div>
<div class="ab" style="left:146px;top:77px;width:17px;height:17px;background:#eeeeee"></div>
<div class="ab" style="left:165px;top:77px;width:688px;height:17px;background:#fff"></div>
<div class="ab" style="left:146px;top:94px;width:707px;height:2px;background:linear-gradient(#9a9a9a,#505050)"></div>
<div class="ab" style="left:163px;top:77px;width:2px;height:17px;background:linear-gradient(90deg,#9a9a9a,#505050)"></div>
<div class="ab" style="left:146px;top:96px;width:17px;height:841px;background:#fff"></div>
<div class="ab" style="left:165px;top:96px;width:688px;height:805px;background:#000"></div>
<svg class="ab" style="left:0;top:0" width="853" height="100" shape-rendering="crispEdges">
<g fill="#000"><rect x="165" y="77" width="1" height="17"/><rect x="175" y="87" width="1" height="7"/><rect x="185" y="87" width="1" height="7"/><rect x="195" y="87" width="1" height="7"/><rect x="205" y="87" width="1" height="7"/><rect x="215" y="82" width="1" height="12"/><rect x="225" y="87" width="1" height="7"/><rect x="235" y="87" width="1" height="7"/><rect x="245" y="87" width="1" height="7"/><rect x="255" y="87" width="1" height="7"/><rect x="265" y="77" width="1" height="17"/><rect x="275" y="87" width="1" height="7"/><rect x="285" y="87" width="1" height="7"/><rect x="295" y="87" width="1" height="7"/><rect x="305" y="87" width="1" height="7"/><rect x="315" y="82" width="1" height="12"/><rect x="325" y="87" width="1" height="7"/><rect x="335" y="87" width="1" height="7"/><rect x="345" y="87" width="1" height="7"/><rect x="355" y="87" width="1" height="7"/><rect x="365" y="77" width="1" height="17"/><rect x="375" y="87" width="1" height="7"/><rect x="385" y="87" width="1" height="7"/><rect x="395" y="87" width="1" height="7"/><rect x="405" y="87" width="1" height="7"/><rect x="415" y="82" width="1" height="12"/><rect x="425" y="87" width="1" height="7"/><rect x="435" y="87" width="1" height="7"/><rect x="445" y="87" width="1" height="7"/><rect x="455" y="87" width="1" height="7"/><rect x="465" y="77" width="1" height="17"/><rect x="475" y="87" width="1" height="7"/><rect x="485" y="87" width="1" height="7"/><rect x="495" y="87" width="1" height="7"/><rect x="505" y="87" width="1" height="7"/><rect x="515" y="82" width="1" height="12"/><rect x="525" y="87" width="1" height="7"/><rect x="535" y="87" width="1" height="7"/><rect x="545" y="87" width="1" height="7"/><rect x="555" y="87" width="1" height="7"/><rect x="565" y="77" width="1" height="17"/><rect x="575" y="87" width="1" height="7"/><rect x="585" y="87" width="1" height="7"/><rect x="595" y="87" width="1" height="7"/><rect x="605" y="87" width="1" height="7"/><rect x="615" y="82" width="1" height="12"/><rect x="625" y="87" width="1" height="7"/><rect x="635" y="87" width="1" height="7"/><rect x="645" y="87" width="1" height="7"/><rect x="655" y="87" width="1" height="7"/><rect x="665" y="77" width="1" height="17"/><rect x="675" y="87" width="1" height="7"/><rect x="685" y="87" width="1" height="7"/><rect x="695" y="87" width="1" height="7"/><rect x="705" y="87" width="1" height="7"/><rect x="715" y="82" width="1" height="12"/><rect x="725" y="87" width="1" height="7"/><rect x="735" y="87" width="1" height="7"/><rect x="745" y="87" width="1" height="7"/><rect x="755" y="87" width="1" height="7"/><rect x="765" y="77" width="1" height="17"/><rect x="775" y="87" width="1" height="7"/><rect x="785" y="87" width="1" height="7"/><rect x="795" y="87" width="1" height="7"/><rect x="805" y="87" width="1" height="7"/><rect x="815" y="82" width="1" height="12"/><rect x="825" y="87" width="1" height="7"/><rect x="835" y="87" width="1" height="7"/><rect x="845" y="87" width="1" height="7"/><rect x="484" y="77" width="1" height="17"/></g>
</svg>
<div class="t" style="left:175px;width:39px;text-align:right;top:78.5px;font-size:8.3px;color:#000">50</div>
<div class="t" style="left:225px;width:39px;text-align:right;top:78.5px;font-size:8.3px;color:#000">100</div>
<div class="t" style="left:275px;width:39px;text-align:right;top:78.5px;font-size:8.3px;color:#000">150</div>
<div class="t" style="left:325px;width:39px;text-align:right;top:78.5px;font-size:8.3px;color:#000">200</div>
<div class="t" style="left:375px;width:39px;text-align:right;top:78.5px;font-size:8.3px;color:#000">250</div>
<div class="t" style="left:425px;width:39px;text-align:right;top:78.5px;font-size:8.3px;color:#000">300</div>
<div class="t" style="left:475px;width:39px;text-align:right;top:78.5px;font-size:8.3px;color:#000">350</div>
<div class="t" style="left:525px;width:39px;text-align:right;top:78.5px;font-size:8.3px;color:#000">400</div>
<div class="t" style="left:575px;width:39px;text-align:right;top:78.5px;font-size:8.3px;color:#000">450</div>
<div class="t" style="left:625px;width:39px;text-align:right;top:78.5px;font-size:8.3px;color:#000">500</div>
<div class="t" style="left:675px;width:39px;text-align:right;top:78.5px;font-size:8.3px;color:#000">550</div>
<div class="t" style="left:725px;width:39px;text-align:right;top:78.5px;font-size:8.3px;color:#000">600</div>
<div class="t" style="left:775px;width:39px;text-align:right;top:78.5px;font-size:8.3px;color:#000">650</div>
<div class="t" style="left:825px;width:39px;text-align:right;top:78.5px;font-size:8.3px;color:#000">700</div>
<svg class="ab" style="left:0;top:0" width="170" height="905" shape-rendering="crispEdges">
<g fill="#000"><rect x="156" y="891" width="6" height="1"/><rect x="156" y="881" width="6" height="1"/><rect x="156" y="871" width="6" height="1"/><rect x="156" y="861" width="6" height="1"/><rect x="151" y="851" width="11" height="1"/><rect x="156" y="841" width="6" height="1"/><rect x="156" y="831" width="6" height="1"/><rect x="156" y="821" width="6" height="1"/><rect x="156" y="811" width="6" height="1"/><rect x="146" y="801" width="16" height="1"/><rect x="156" y="791" width="6" height="1"/><rect x="156" y="781" width="6" height="1"/><rect x="156" y="771" width="6" height="1"/><rect x="156" y="761" width="6" height="1"/><rect x="151" y="751" width="11" height="1"/><rect x="156" y="741" width="6" height="1"/><rect x="156" y="731" width="6" height="1"/><rect x="156" y="721" width="6" height="1"/><rect x="156" y="711" width="6" height="1"/><rect x="146" y="701" width="16" height="1"/><rect x="156" y="691" width="6" height="1"/><rect x="156" y="681" width="6" height="1"/><rect x="156" y="671" width="6" height="1"/><rect x="156" y="661" width="6" height="1"/><rect x="151" y="651" width="11" height="1"/><rect x="156" y="641" width="6" height="1"/><rect x="156" y="631" width="6" height="1"/><rect x="156" y="621" width="6" height="1"/><rect x="156" y="611" width="6" height="1"/><rect x="146" y="601" width="16" height="1"/><rect x="156" y="591" width="6" height="1"/><rect x="156" y="581" width="6" height="1"/><rect x="156" y="571" width="6" height="1"/><rect x="156" y="561" width="6" height="1"/><rect x="151" y="551" width="11" height="1"/><rect x="156" y="541" width="6" height="1"/><rect x="156" y="531" width="6" height="1"/><rect x="156" y="521" width="6" height="1"/><rect x="156" y="511" width="6" height="1"/><rect x="146" y="501" width="16" height="1"/><rect x="156" y="491" width="6" height="1"/><rect x="156" y="481" width="6" height="1"/><rect x="156" y="471" width="6" height="1"/><rect x="156" y="461" width="6" height="1"/><rect x="151" y="451" width="11" height="1"/><rect x="156" y="441" width="6" height="1"/><rect x="156" y="431" width="6" height="1"/><rect x="156" y="421" width="6" height="1"/><rect x="156" y="411" width="6" height="1"/><rect x="146" y="401" width="16" height="1"/><rect x="156" y="391" width="6" height="1"/><rect x="156" y="381" width="6" height="1"/><rect x="156" y="371" width="6" height="1"/><rect x="156" y="361" width="6" height="1"/><rect x="151" y="351" width="11" height="1"/><rect x="156" y="341" width="6" height="1"/><rect x="156" y="331" width="6" height="1"/><rect x="156" y="321" width="6" height="1"/><rect x="156" y="311" width="6" height="1"/><rect x="146" y="301" width="16" height="1"/><rect x="156" y="291" width="6" height="1"/><rect x="156" y="281" width="6" height="1"/><rect x="156" y="271" width="6" height="1"/><rect x="156" y="261" width="6" height="1"/><rect x="151" y="251" width="11" height="1"/><rect x="156" y="241" width="6" height="1"/><rect x="156" y="231" width="6" height="1"/><rect x="156" y="221" width="6" height="1"/><rect x="156" y="211" width="6" height="1"/><rect x="146" y="201" width="16" height="1"/><rect x="156" y="191" width="6" height="1"/><rect x="156" y="181" width="6" height="1"/><rect x="156" y="171" width="6" height="1"/><rect x="156" y="161" width="6" height="1"/><rect x="151" y="151" width="11" height="1"/><rect x="156" y="141" width="6" height="1"/><rect x="156" y="131" width="6" height="1"/><rect x="156" y="121" width="6" height="1"/><rect x="156" y="111" width="6" height="1"/><rect x="146" y="101" width="16" height="1"/><rect x="146" y="125" width="17" height="1"/><rect x="146" y="96" width="16" height="1"/></g>
</svg>
<div class="ab" style="left:146px;top:96px;width:17px;height:805px;overflow:hidden">
<div class="t" style="left:1px;top:755px;font-size:8.3px;color:#000;transform-origin:0 0;transform:rotate(-90deg)">50</div>
<div class="t" style="left:1px;top:705px;font-size:8.3px;color:#000;transform-origin:0 0;transform:rotate(-90deg)">100</div>
<div class="t" style="left:1px;top:655px;font-size:8.3px;color:#000;transform-origin:0 0;transform:rotate(-90deg)">150</div>
<div class="t" style="left:1px;top:605px;font-size:8.3px;color:#000;transform-origin:0 0;transform:rotate(-90deg)">200</div>
<div class="t" style="left:1px;top:555px;font-size:8.3px;color:#000;transform-origin:0 0;transform:rotate(-90deg)">250</div>
<div class="t" style="left:1px;top:505px;font-size:8.3px;color:#000;transform-origin:0 0;transform:rotate(-90deg)">300</div>
<div class="t" style="left:1px;top:455px;font-size:8.3px;color:#000;transform-origin:0 0;transform:rotate(-90deg)">350</div>
<div class="t" style="left:1px;top:405px;font-size:8.3px;color:#000;transform-origin:0 0;transform:rotate(-90deg)">400</div>
<div class="t" style="left:1px;top:355px;font-size:8.3px;color:#000;transform-origin:0 0;transform:rotate(-90deg)">450</div>
<div class="t" style="left:1px;top:305px;font-size:8.3px;color:#000;transform-origin:0 0;transform:rotate(-90deg)">500</div>
<div class="t" style="left:1px;top:255px;font-size:8.3px;color:#000;transform-origin:0 0;transform:rotate(-90deg)">550</div>
<div class="t" style="left:1px;top:205px;font-size:8.3px;color:#000;transform-origin:0 0;transform:rotate(-90deg)">600</div>
<div class="t" style="left:1px;top:155px;font-size:8.3px;color:#000;transform-origin:0 0;transform:rotate(-90deg)">650</div>
<div class="t" style="left:1px;top:105px;font-size:8.3px;color:#000;transform-origin:0 0;transform:rotate(-90deg)">700</div>
<div class="t" style="left:1px;top:55px;font-size:8.3px;color:#000;transform-origin:0 0;transform:rotate(-90deg)">750</div>
<div class="t" style="left:1px;top:5px;font-size:8.3px;color:#000;transform-origin:0 0;transform:rotate(-90deg)">800</div>
</div>
<svg class="ab" style="left:165px;top:96px" width="688" height="805" viewBox="165 96 688 805" shape-rendering="crispEdges">
<defs>
<pattern id="chk" x="0" y="0" width="2" height="2" patternUnits="userSpaceOnUse">
<rect x="0" y="0" width="2" height="2" fill="#c0dcc0"/><rect x="1" y="0" width="1" height="1" fill="#a6caf0"/><rect x="0" y="1" width="1" height="1" fill="#a6caf0"/><rect x="1" y="1" width="1" height="1" fill="#800000"/>
</pattern>
<pattern id="rib" x="0" y="0" width="2" height="2" patternUnits="userSpaceOnUse">
<rect x="0" y="0" width="1" height="2" fill="#c0dcc0"/><rect x="1" y="0" width="1" height="2" fill="#a6caf0"/>
</pattern>
<clipPath id="body"><path d="M202 437H252V485L289 584L327 484V437H375V560L384 586L401 618H411V901H166V618H176L192 586L202 559Z"/></clipPath>
</defs>
<rect x="166" y="385" width="245" height="51" fill="url(#chk)"/>
<g fill="#0000ff"><rect x="166" y="437" width="1" height="1"/><rect x="168" y="437" width="1" height="1"/><rect x="170" y="437" width="1" height="1"/><rect x="172" y="437" width="1" height="1"/><rect x="174" y="437" width="1" height="1"/><rect x="176" y="437" width="1" height="1"/><rect x="178" y="437" width="1" height="1"/><rect x="180" y="437" width="1" height="1"/><rect x="182" y="437" width="1" height="1"/><rect x="184" y="437" width="1" height="1"/><rect x="186" y="437" width="1" height="1"/><rect x="188" y="437" width="1" height="1"/><rect x="190" y="437" width="1" height="1"/><rect x="192" y="437" width="1" height="1"/><rect x="194" y="437" width="1" height="1"/><rect x="196" y="437" width="1" height="1"/><rect x="198" y="437" width="1" height="1"/><rect x="200" y="437" width="1" height="1"/></g>
<g fill="#8080ff"><rect x="167" y="437" width="1" height="1"/><rect x="169" y="437" width="1" height="1"/><rect x="171" y="437" width="1" height="1"/><rect x="173" y="437" width="1" height="1"/><rect x="175" y="437" width="1" height="1"/><rect x="177" y="437" width="1" height="1"/><rect x="179" y="437" width="1" height="1"/><rect x="181" y="437" width="1" height="1"/><rect x="183" y="437" width="1" height="1"/><rect x="185" y="437" width="1" height="1"/><rect x="187" y="437" width="1" height="1"/><rect x="189" y="437" width="1" height="1"/><rect x="191" y="437" width="1" height="1"/><rect x="193" y="437" width="1" height="1"/><rect x="195" y="437" width="1" height="1"/><rect x="197" y="437" width="1" height="1"/><rect x="199" y="437" width="1" height="1"/><rect x="201" y="437" width="1" height="1"/></g>
<g clip-path="url(#body)">
<rect x="166" y="437" width="245" height="389" fill="#800000"/>
<rect x="166" y="437" width="245" height="1" fill="#c0c000"/>
<rect x="166" y="438" width="245" height="1" fill="#ff0000"/>
<rect x="166" y="439" width="245" height="8" fill="#c0dcc0"/>
<g fill="#108a10"><rect x="201" y="449" width="1" height="15"/><rect x="217" y="449" width="1" height="15"/><rect x="233" y="449" width="1" height="15"/><rect x="249" y="449" width="1" height="15"/><rect x="265" y="449" width="1" height="15"/><rect x="281" y="449" width="1" height="15"/><rect x="297" y="449" width="1" height="15"/><rect x="313" y="449" width="1" height="15"/><rect x="329" y="449" width="1" height="15"/><rect x="345" y="449" width="1" height="15"/><rect x="361" y="449" width="1" height="15"/><rect x="377" y="449" width="1" height="15"/><rect x="393" y="449" width="1" height="15"/><rect x="409" y="449" width="1" height="15"/><rect x="209" y="464" width="1" height="15"/><rect x="225" y="464" width="1" height="15"/><rect x="241" y="464" width="1" height="15"/><rect x="257" y="464" width="1" height="15"/><rect x="273" y="464" width="1" height="15"/><rect x="289" y="464" width="1" height="15"/><rect x="305" y="464" width="1" height="15"/><rect x="321" y="464" width="1" height="15"/><rect x="337" y="464" width="1" height="15"/><rect x="353" y="464" width="1" height="15"/><rect x="369" y="464" width="1" height="15"/><rect x="385" y="464" width="1" height="15"/><rect x="401" y="464" width="1" height="15"/><rect x="201" y="479" width="1" height="15"/><rect x="217" y="479" width="1" height="15"/><rect x="233" y="479" width="1" height="15"/><rect x="249" y="479" width="1" height="15"/><rect x="265" y="479" width="1" height="15"/><rect x="281" y="479" width="1" height="15"/><rect x="297" y="479" width="1" height="15"/><rect x="313" y="479" width="1" height="15"/><rect x="329" y="479" width="1" height="15"/><rect x="345" y="479" width="1" height="15"/><rect x="361" y="479" width="1" height="15"/><rect x="377" y="479" width="1" height="15"/><rect x="393" y="479" width="1" height="15"/><rect x="409" y="479" width="1" height="15"/><rect x="209" y="494" width="1" height="15"/><rect x="225" y="494" width="1" height="15"/><rect x="241" y="494" width="1" height="15"/><rect x="257" y="494" width="1" height="15"/><rect x="273" y="494" width="1" height="15"/><rect x="289" y="494" width="1" height="15"/><rect x="305" y="494" width="1" height="15"/><rect x="321" y="494" width="1" height="15"/><rect x="337" y="494" width="1" height="15"/><rect x="353" y="494" width="1" height="15"/><rect x="369" y="494" width="1" height="15"/><rect x="385" y="494" width="1" height="15"/><rect x="401" y="494" width="1" height="15"/><rect x="201" y="509" width="1" height="15"/><rect x="217" y="509" width="1" height="15"/><rect x="233" y="509" width="1" height="15"/><rect x="249" y="509" width="1" height="15"/><rect x="265" y="509" width="1" height="15"/><rect x="281" y="509" width="1" height="15"/><rect x="297" y="509" width="1" height="15"/><rect x="313" y="509" width="1" height="15"/><rect x="329" y="509" width="1" height="15"/><rect x="345" y="509" width="1" height="15"/><rect x="361" y="509" width="1" height="15"/><rect x="377" y="509" width="1" height="15"/><rect x="393" y="509" width="1" height="15"/><rect x="409" y="509" width="1" height="15"/><rect x="209" y="524" width="1" height="15"/><rect x="225" y="524" width="1" height="15"/><rect x="241" y="524" width="1" height="15"/><rect x="257" y="524" width="1" height="15"/><rect x="273" y="524" width="1" height="15"/><rect x="289" y="524" width="1" height="15"/><rect x="305" y="524" width="1" height="15"/><rect x="321" y="524" width="1" height="15"/><rect x="337" y="524" width="1" height="15"/><rect x="353" y="524" width="1" height="15"/><rect x="369" y="524" width="1" height="15"/><rect x="385" y="524" width="1" height="15"/><rect x="401" y="524" width="1" height="15"/><rect x="201" y="539" width="1" height="15"/><rect x="217" y="539" width="1" height="15"/><rect x="233" y="539" width="1" height="15"/><rect x="249" y="539" width="1" height="15"/><rect x="265" y="539" width="1" height="15"/><rect x="281" y="539" width="1" height="15"/><rect x="297" y="539" width="1" height="15"/><rect x="313" y="539" width="1" height="15"/><rect x="329" y="539" width="1" height="15"/><rect x="345" y="539" width="1" height="15"/><rect x="361" y="539" width="1" height="15"/><rect x="377" y="539" width="1" height="15"/><rect x="393" y="539" width="1" height="15"/><rect x="409" y="539" width="1" height="15"/><rect x="209" y="554" width="1" height="15"/><rect x="225" y="554" width="1" height="15"/><rect x="241" y="554" width="1" height="15"/><rect x="257" y="554" width="1" height="15"/><rect x="273" y="554" width="1" height="15"/><rect x="289" y="554" width="1" height="15"/><rect x="305" y="554" width="1" height="15"/><rect x="321" y="554" width="1" height="15"/><rect x="337" y="554" width="1" height="15"/><rect x="353" y="554" width="1" height="15"/><rect x="369" y="554" width="1" height="15"/><rect x="385" y="554" width="1" height="15"/><rect x="401" y="554" width="1" height="15"/><rect x="201" y="569" width="1" height="15"/><rect x="217" y="569" width="1" height="15"/><rect x="233" y="569" width="1" height="15"/><rect x="249" y="569" width="1" height="15"/><rect x="265" y="569" width="1" height="15"/><rect x="281" y="569" width="1" height="15"/><rect x="297" y="569" width="1" height="15"/><rect x="313" y="569" width="1" height="15"/><rect x="329" y="569" width="1" height="15"/><rect x="345" y="569" width="1" height="15"/><rect x="361" y="569" width="1" height="15"/><rect x="377" y="569" width="1" height="15"/><rect x="393" y="569" width="1" height="15"/><rect x="409" y="569" width="1" height="15"/></g>
<g fill="#108a10"><rect x="168" y="585" width="241" height="1"/><rect x="168" y="587" width="241" height="1"/><rect x="168" y="589" width="241" height="1"/><rect x="168" y="607" width="241" height="1"/><rect x="168" y="609" width="241" height="1"/><rect x="168" y="611" width="241" height="1"/><rect x="168" y="631" width="241" height="1"/><rect x="168" y="633" width="241" height="1"/><rect x="168" y="635" width="241" height="1"/><rect x="168" y="655" width="241" height="1"/><rect x="168" y="657" width="241" height="1"/><rect x="168" y="659" width="241" height="1"/></g>
<clipPath id="zz"><rect x="168" y="660" width="241" height="20"/></clipPath>
<path clip-path="url(#zz)" d="M157.5 661L171.5 679M171.5 661L157.5 679M171.5 661L185.5 679M185.5 661L171.5 679M185.5 661L199.5 679M199.5 661L185.5 679M199.5 661L213.5 679M213.5 661L199.5 679M213.5 661L227.5 679M227.5 661L213.5 679M227.5 661L241.5 679M241.5 661L227.5 679M241.5 661L255.5 679M255.5 661L241.5 679M255.5 661L269.5 679M269.5 661L255.5 679M269.5 661L283.5 679M283.5 661L269.5 679M283.5 661L297.5 679M297.5 661L283.5 679M297.5 661L311.5 679M311.5 661L297.5 679M311.5 661L325.5 679M325.5 661L311.5 679M325.5 661L339.5 679M339.5 661L325.5 679M339.5 661L353.5 679M353.5 661L339.5 679M353.5 661L367.5 679M367.5 661L353.5 679M367.5 661L381.5 679M381.5 661L367.5 679M381.5 661L395.5 679M395.5 661L381.5 679M395.5 661L409.5 679M409.5 661L395.5 679M409.5 661L423.5 679M423.5 661L409.5 679M423.5 661L437.5 679M437.5 661L423.5 679" stroke="#108a10" stroke-width="1.6" fill="none" shape-rendering="auto"/>
<rect x="166" y="680" width="245" height="1" fill="#a0a000"/>
<rect x="166" y="681" width="245" height="4" fill="#c0dcc0"/>
<rect x="166" y="685" width="245" height="1" fill="#ff0000"/>
<rect x="166" y="704" width="245" height="1" fill="#a0a000"/>
<rect x="166" y="705" width="245" height="4" fill="#c0dcc0"/>
<rect x="166" y="709" width="245" height="1" fill="#ff0000"/>
<rect x="166" y="728" width="245" height="1" fill="#a0a000"/>
<rect x="166" y="729" width="245" height="4" fill="#c0dcc0"/>
<rect x="166" y="733" width="245" height="1" fill="#ff0000"/>
<rect x="166" y="752" width="245" height="1" fill="#a0a000"/>
<rect x="166" y="753" width="245" height="4" fill="#c0dcc0"/>
<rect x="166" y="757" width="245" height="1" fill="#ff0000"/>
<rect x="166" y="776" width="245" height="1" fill="#a0a000"/>
<rect x="166" y="777" width="245" height="4" fill="#c0dcc0"/>
<rect x="166" y="781" width="245" height="1" fill="#ff0000"/>
<rect x="166" y="802" width="245" height="1" fill="#108a10"/>
<rect x="166" y="803" width="245" height="4" fill="#c0dcc0"/>
<rect x="166" y="807" width="245" height="1" fill="#ff0000"/>
<g fill="#108a10"><rect x="169" y="687" width="1" height="16"/><rect x="183" y="687" width="1" height="16"/><rect x="197" y="687" width="1" height="16"/><rect x="211" y="687" width="1" height="16"/><rect x="225" y="687" width="1" height="16"/><rect x="239" y="687" width="1" height="16"/><rect x="253" y="687" width="1" height="16"/><rect x="267" y="687" width="1" height="16"/><rect x="281" y="687" width="1" height="16"/><rect x="295" y="687" width="1" height="16"/><rect x="309" y="687" width="1" height="16"/><rect x="323" y="687" width="1" height="16"/><rect x="337" y="687" width="1" height="16"/><rect x="351" y="687" width="1" height="16"/><rect x="365" y="687" width="1" height="16"/><rect x="379" y="687" width="1" height="16"/><rect x="393" y="687" width="1" height="16"/><rect x="407" y="687" width="1" height="16"/></g>
<clipPath id="cv"><rect x="167" y="782" width="244" height="20"/></clipPath>
<path clip-path="url(#cv)" d="M175 783L168.5 792L175 801M182 783L175.5 792L182 801M189 783L182.5 792L189 801M196 783L189.5 792L196 801M203 783L196.5 792L203 801M210 783L203.5 792L210 801M217 783L210.5 792L217 801M224 783L217.5 792L224 801M231 783L224.5 792L231 801M238 783L231.5 792L238 801M245 783L238.5 792L245 801M252 783L245.5 792L252 801M259 783L252.5 792L259 801M266 783L259.5 792L266 801M273 783L266.5 792L273 801M280 783L273.5 792L280 801M287 783L280.5 792L287 801M294 783L287.5 792L294 801M301 783L294.5 792L301 801M308 783L301.5 792L308 801M315 783L308.5 792L315 801M322 783L315.5 792L322 801M329 783L322.5 792L329 801M336 783L329.5 792L336 801M343 783L336.5 792L343 801M350 783L343.5 792L350 801M357 783L350.5 792L357 801M364 783L357.5 792L364 801M371 783L364.5 792L371 801M378 783L371.5 792L378 801M385 783L378.5 792L385 801M392 783L385.5 792L392 801M399 783L392.5 792L399 801M406 783L399.5 792L406 801M413 783L406.5 792L413 801M420 783L413.5 792L420 801" stroke="#0a8a0a" stroke-width="2.2" fill="none" shape-rendering="auto"/>
<rect x="166" y="826" width="245" height="58" fill="url(#rib)"/>
<g fill="#1a8a1a"><rect x="167" y="825" width="1" height="1"/><rect x="169" y="825" width="1" height="1"/><rect x="171" y="825" width="1" height="1"/><rect x="173" y="825" width="1" height="1"/><rect x="175" y="825" width="1" height="1"/><rect x="177" y="825" width="1" height="1"/><rect x="179" y="825" width="1" height="1"/><rect x="181" y="825" width="1" height="1"/><rect x="183" y="825" width="1" height="1"/><rect x="185" y="825" width="1" height="1"/><rect x="187" y="825" width="1" height="1"/><rect x="189" y="825" width="1" height="1"/><rect x="191" y="825" width="1" height="1"/><rect x="193" y="825" width="1" height="1"/><rect x="195" y="825" width="1" height="1"/><rect x="197" y="825" width="1" height="1"/><rect x="199" y="825" width="1" height="1"/><rect x="201" y="825" width="1" height="1"/><rect x="203" y="825" width="1" height="1"/><rect x="205" y="825" width="1" height="1"/><rect x="207" y="825" width="1" height="1"/><rect x="209" y="825" width="1" height="1"/><rect x="211" y="825" width="1" height="1"/><rect x="213" y="825" width="1" height="1"/><rect x="215" y="825" width="1" height="1"/><rect x="217" y="825" width="1" height="1"/><rect x="219" y="825" width="1" height="1"/><rect x="221" y="825" width="1" height="1"/><rect x="223" y="825" width="1" height="1"/><rect x="225" y="825" width="1" height="1"/><rect x="227" y="825" width="1" height="1"/><rect x="229" y="825" width="1" height="1"/><rect x="231" y="825" width="1" height="1"/><rect x="233" y="825" width="1" height="1"/><rect x="235" y="825" width="1" height="1"/><rect x="237" y="825" width="1" height="1"/><rect x="239" y="825" width="1" height="1"/><rect x="241" y="825" width="1" height="1"/><rect x="243" y="825" width="1" height="1"/><rect x="245" y="825" width="1" height="1"/><rect x="247" y="825" width="1" height="1"/><rect x="249" y="825" width="1" height="1"/><rect x="251" y="825" width="1" height="1"/><rect x="253" y="825" width="1" height="1"/><rect x="255" y="825" width="1" height="1"/><rect x="257" y="825" width="1" height="1"/><rect x="259" y="825" width="1" height="1"/><rect x="261" y="825" width="1" height="1"/><rect x="263" y="825" width="1" height="1"/><rect x="265" y="825" width="1" height="1"/><rect x="267" y="825" width="1" height="1"/><rect x="269" y="825" width="1" height="1"/><rect x="271" y="825" width="1" height="1"/><rect x="273" y="825" width="1" height="1"/><rect x="275" y="825" width="1" height="1"/><rect x="277" y="825" width="1" height="1"/><rect x="279" y="825" width="1" height="1"/><rect x="281" y="825" width="1" height="1"/><rect x="283" y="825" width="1" height="1"/><rect x="285" y="825" width="1" height="1"/><rect x="287" y="825" width="1" height="1"/><rect x="289" y="825" width="1" height="1"/><rect x="291" y="825" width="1" height="1"/><rect x="293" y="825" width="1" height="1"/><rect x="295" y="825" width="1" height="1"/><rect x="297" y="825" width="1" height="1"/><rect x="299" y="825" width="1" height="1"/><rect x="301" y="825" width="1" height="1"/><rect x="303" y="825" width="1" height="1"/><rect x="305" y="825" width="1" height="1"/><rect x="307" y="825" width="1" height="1"/><rect x="309" y="825" width="1" height="1"/><rect x="311" y="825" width="1" height="1"/><rect x="313" y="825" width="1" height="1"/><rect x="315" y="825" width="1" height="1"/><rect x="317" y="825" width="1" height="1"/><rect x="319" y="825" width="1" height="1"/><rect x="321" y="825" width="1" height="1"/><rect x="323" y="825" width="1" height="1"/><rect x="325" y="825" width="1" height="1"/><rect x="327" y="825" width="1" height="1"/><rect x="329" y="825" width="1" height="1"/><rect x="331" y="825" width="1" height="1"/><rect x="333" y="825" width="1" height="1"/><rect x="335" y="825" width="1" height="1"/><rect x="337" y="825" width="1" height="1"/><rect x="339" y="825" width="1" height="1"/><rect x="341" y="825" width="1" height="1"/><rect x="343" y="825" width="1" height="1"/><rect x="345" y="825" width="1" height="1"/><rect x="347" y="825" width="1" height="1"/><rect x="349" y="825" width="1" height="1"/><rect x="351" y="825" width="1" height="1"/><rect x="353" y="825" width="1" height="1"/><rect x="355" y="825" width="1" height="1"/><rect x="357" y="825" width="1" height="1"/><rect x="359" y="825" width="1" height="1"/><rect x="361" y="825" width="1" height="1"/><rect x="363" y="825" width="1" height="1"/><rect x="365" y="825" width="1" height="1"/><rect x="367" y="825" width="1" height="1"/><rect x="369" y="825" width="1" height="1"/><rect x="371" y="825" width="1" height="1"/><rect x="373" y="825" width="1" height="1"/><rect x="375" y="825" width="1" height="1"/><rect x="377" y="825" width="1" height="1"/><rect x="379" y="825" width="1" height="1"/><rect x="381" y="825" width="1" height="1"/><rect x="383" y="825" width="1" height="1"/><rect x="385" y="825" width="1" height="1"/><rect x="387" y="825" width="1" height="1"/><rect x="389" y="825" width="1" height="1"/><rect x="391" y="825" width="1" height="1"/><rect x="393" y="825" width="1" height="1"/><rect x="395" y="825" width="1" height="1"/><rect x="397" y="825" width="1" height="1"/><rect x="399" y="825" width="1" height="1"/><rect x="401" y="825" width="1" height="1"/><rect x="403" y="825" width="1" height="1"/><rect x="405" y="825" width="1" height="1"/><rect x="407" y="825" width="1" height="1"/><rect x="409" y="825" width="1" height="1"/></g>
<rect x="166" y="884" width="245" height="2" fill="#c0dcc0"/>
<g fill="#000"><rect x="166" y="884" width="1" height="1"/><rect x="167" y="885" width="1" height="1"/><rect x="168" y="884" width="1" height="1"/><rect x="169" y="885" width="1" height="1"/><rect x="170" y="884" width="1" height="1"/><rect x="171" y="885" width="1" height="1"/><rect x="172" y="884" width="1" height="1"/><rect x="173" y="885" width="1" height="1"/><rect x="174" y="884" width="1" height="1"/><rect x="175" y="885" width="1" height="1"/><rect x="176" y="884" width="1" height="1"/><rect x="177" y="885" width="1" height="1"/><rect x="178" y="884" width="1" height="1"/><rect x="179" y="885" width="1" height="1"/><rect x="180" y="884" width="1" height="1"/><rect x="181" y="885" width="1" height="1"/><rect x="182" y="884" width="1" height="1"/><rect x="183" y="885" width="1" height="1"/><rect x="184" y="884" width="1" height="1"/><rect x="185" y="885" width="1" height="1"/><rect x="186" y="884" width="1" height="1"/><rect x="187" y="885" width="1" height="1"/><rect x="188" y="884" width="1" height="1"/><rect x="189" y="885" width="1" height="1"/><rect x="190" y="884" width="1" height="1"/><rect x="191" y="885" width="1" height="1"/><rect x="192" y="884" width="1" height="1"/><rect x="193" y="885" width="1" height="1"/><rect x="194" y="884" width="1" height="1"/><rect x="195" y="885" width="1" height="1"/><rect x="196" y="884" width="1" height="1"/><rect x="197" y="885" width="1" height="1"/><rect x="198" y="884" width="1" height="1"/><rect x="199" y="885" width="1" height="1"/><rect x="200" y="884" width="1" height="1"/><rect x="201" y="885" width="1" height="1"/><rect x="202" y="884" width="1" height="1"/><rect x="203" y="885" width="1" height="1"/><rect x="204" y="884" width="1" height="1"/><rect x="205" y="885" width="1" height="1"/><rect x="206" y="884" width="1" height="1"/><rect x="207" y="885" width="1" height="1"/><rect x="208" y="884" width="1" height="1"/><rect x="209" y="885" width="1" height="1"/><rect x="210" y="884" width="1" height="1"/><rect x="211" y="885" width="1" height="1"/><rect x="212" y="884" width="1" height="1"/><rect x="213" y="885" width="1" height="1"/><rect x="214" y="884" width="1" height="1"/><rect x="215" y="885" width="1" height="1"/><rect x="216" y="884" width="1" height="1"/><rect x="217" y="885" width="1" height="1"/><rect x="218" y="884" width="1" height="1"/><rect x="219" y="885" width="1" height="1"/><rect x="220" y="884" width="1" height="1"/><rect x="221" y="885" width="1" height="1"/><rect x="222" y="884" width="1" height="1"/><rect x="223" y="885" width="1" height="1"/><rect x="224" y="884" width="1" height="1"/><rect x="225" y="885" width="1" height="1"/><rect x="226" y="884" width="1" height="1"/><rect x="227" y="885" width="1" height="1"/><rect x="228" y="884" width="1" height="1"/><rect x="229" y="885" width="1" height="1"/><rect x="230" y="884" width="1" height="1"/><rect x="231" y="885" width="1" height="1"/><rect x="232" y="884" width="1" height="1"/><rect x="233" y="885" width="1" height="1"/><rect x="234" y="884" width="1" height="1"/><rect x="235" y="885" width="1" height="1"/><rect x="236" y="884" width="1" height="1"/><rect x="237" y="885" width="1" height="1"/><rect x="238" y="884" width="1" height="1"/><rect x="239" y="885" width="1" height="1"/><rect x="240" y="884" width="1" height="1"/><rect x="241" y="885" width="1" height="1"/><rect x="242" y="884" width="1" height="1"/><rect x="243" y="885" width="1" height="1"/><rect x="244" y="884" width="1" height="1"/><rect x="245" y="885" width="1" height="1"/><rect x="246" y="884" width="1" height="1"/><rect x="247" y="885" width="1" height="1"/><rect x="248" y="884" width="1" height="1"/><rect x="249" y="885" width="1" height="1"/><rect x="250" y="884" width="1" height="1"/><rect x="251" y="885" width="1" height="1"/><rect x="252" y="884" width="1" height="1"/><rect x="253" y="885" width="1" height="1"/><rect x="254" y="884" width="1" height="1"/><rect x="255" y="885" width="1" height="1"/><rect x="256" y="884" width="1" height="1"/><rect x="257" y="885" width="1" height="1"/><rect x="258" y="884" width="1" height="1"/><rect x="259" y="885" width="1" height="1"/><rect x="260" y="884" width="1" height="1"/><rect x="261" y="885" width="1" height="1"/><rect x="262" y="884" width="1" height="1"/><rect x="263" y="885" width="1" height="1"/><rect x="264" y="884" width="1" height="1"/><rect x="265" y="885" width="1" height="1"/><rect x="266" y="884" width="1" height="1"/><rect x="267" y="885" width="1" height="1"/><rect x="268" y="884" width="1" height="1"/><rect x="269" y="885" width="1" height="1"/><rect x="270" y="884" width="1" height="1"/><rect x="271" y="885" width="1" height="1"/><rect x="272" y="884" width="1" height="1"/><rect x="273" y="885" width="1" height="1"/><rect x="274" y="884" width="1" height="1"/><rect x="275" y="885" width="1" height="1"/><rect x="276" y="884" width="1" height="1"/><rect x="277" y="885" width="1" height="1"/><rect x="278" y="884" width="1" height="1"/><rect x="279" y="885" width="1" height="1"/><rect x="280" y="884" width="1" height="1"/><rect x="281" y="885" width="1" height="1"/><rect x="282" y="884" width="1" height="1"/><rect x="283" y="885" width="1" height="1"/><rect x="284" y="884" width="1" height="1"/><rect x="285" y="885" width="1" height="1"/><rect x="286" y="884" width="1" height="1"/><rect x="287" y="885" width="1" height="1"/><rect x="288" y="884" width="1" height="1"/><rect x="289" y="885" width="1" height="1"/><rect x="290" y="884" width="1" height="1"/><rect x="291" y="885" width="1" height="1"/><rect x="292" y="884" width="1" height="1"/><rect x="293" y="885" width="1" height="1"/><rect x="294" y="884" width="1" height="1"/><rect x="295" y="885" width="1" height="1"/><rect x="296" y="884" width="1" height="1"/><rect x="297" y="885" width="1" height="1"/><rect x="298" y="884" width="1" height="1"/><rect x="299" y="885" width="1" height="1"/><rect x="300" y="884" width="1" height="1"/><rect x="301" y="885" width="1" height="1"/><rect x="302" y="884" width="1" height="1"/><rect x="303" y="885" width="1" height="1"/><rect x="304" y="884" width="1" height="1"/><rect x="305" y="885" width="1" height="1"/><rect x="306" y="884" width="1" height="1"/><rect x="307" y="885" width="1" height="1"/><rect x="308" y="884" width="1" height="1"/><rect x="309" y="885" width="1" height="1"/><rect x="310" y="884" width="1" height="1"/><rect x="311" y="885" width="1" height="1"/><rect x="312" y="884" width="1" height="1"/><rect x="313" y="885" width="1" height="1"/><rect x="314" y="884" width="1" height="1"/><rect x="315" y="885" width="1" height="1"/><rect x="316" y="884" width="1" height="1"/><rect x="317" y="885" width="1" height="1"/><rect x="318" y="884" width="1" height="1"/><rect x="319" y="885" width="1" height="1"/><rect x="320" y="884" width="1" height="1"/><rect x="321" y="885" width="1" height="1"/><rect x="322" y="884" width="1" height="1"/><rect x="323" y="885" width="1" height="1"/><rect x="324" y="884" width="1" height="1"/><rect x="325" y="885" width="1" height="1"/><rect x="326" y="884" width="1" height="1"/><rect x="327" y="885" width="1" height="1"/><rect x="328" y="884" width="1" height="1"/><rect x="329" y="885" width="1" height="1"/><rect x="330" y="884" width="1" height="1"/><rect x="331" y="885" width="1" height="1"/><rect x="332" y="884" width="1" height="1"/><rect x="333" y="885" width="1" height="1"/><rect x="334" y="884" width="1" height="1"/><rect x="335" y="885" width="1" height="1"/><rect x="336" y="884" width="1" height="1"/><rect x="337" y="885" width="1" height="1"/><rect x="338" y="884" width="1" height="1"/><rect x="339" y="885" width="1" height="1"/><rect x="340" y="884" width="1" height="1"/><rect x="341" y="885" width="1" height="1"/><rect x="342" y="884" width="1" height="1"/><rect x="343" y="885" width="1" height="1"/><rect x="344" y="884" width="1" height="1"/><rect x="345" y="885" width="1" height="1"/><rect x="346" y="884" width="1" height="1"/><rect x="347" y="885" width="1" height="1"/><rect x="348" y="884" width="1" height="1"/><rect x="349" y="885" width="1" height="1"/><rect x="350" y="884" width="1" height="1"/><rect x="351" y="885" width="1" height="1"/><rect x="352" y="884" width="1" height="1"/><rect x="353" y="885" width="1" height="1"/><rect x="354" y="884" width="1" height="1"/><rect x="355" y="885" width="1" height="1"/><rect x="356" y="884" width="1" height="1"/><rect x="357" y="885" width="1" height="1"/><rect x="358" y="884" width="1" height="1"/><rect x="359" y="885" width="1" height="1"/><rect x="360" y="884" width="1" height="1"/><rect x="361" y="885" width="1" height="1"/><rect x="362" y="884" width="1" height="1"/><rect x="363" y="885" width="1" height="1"/><rect x="364" y="884" width="1" height="1"/><rect x="365" y="885" width="1" height="1"/><rect x="366" y="884" width="1" height="1"/><rect x="367" y="885" width="1" height="1"/><rect x="368" y="884" width="1" height="1"/><rect x="369" y="885" width="1" height="1"/><rect x="370" y="884" width="1" height="1"/><rect x="371" y="885" width="1" height="1"/><rect x="372" y="884" width="1" height="1"/><rect x="373" y="885" width="1" height="1"/><rect x="374" y="884" width="1" height="1"/><rect x="375" y="885" width="1" height="1"/><rect x="376" y="884" width="1" height="1"/><rect x="377" y="885" width="1" height="1"/><rect x="378" y="884" width="1" height="1"/><rect x="379" y="885" width="1" height="1"/><rect x="380" y="884" width="1" height="1"/><rect x="381" y="885" width="1" height="1"/><rect x="382" y="884" width="1" height="1"/><rect x="383" y="885" width="1" height="1"/><rect x="384" y="884" width="1" height="1"/><rect x="385" y="885" width="1" height="1"/><rect x="386" y="884" width="1" height="1"/><rect x="387" y="885" width="1" height="1"/><rect x="388" y="884" width="1" height="1"/><rect x="389" y="885" width="1" height="1"/><rect x="390" y="884" width="1" height="1"/><rect x="391" y="885" width="1" height="1"/><rect x="392" y="884" width="1" height="1"/><rect x="393" y="885" width="1" height="1"/><rect x="394" y="884" width="1" height="1"/><rect x="395" y="885" width="1" height="1"/><rect x="396" y="884" width="1" height="1"/><rect x="397" y="885" width="1" height="1"/><rect x="398" y="884" width="1" height="1"/><rect x="399" y="885" width="1" height="1"/><rect x="400" y="884" width="1" height="1"/><rect x="401" y="885" width="1" height="1"/><rect x="402" y="884" width="1" height="1"/><rect x="403" y="885" width="1" height="1"/><rect x="404" y="884" width="1" height="1"/><rect x="405" y="885" width="1" height="1"/><rect x="406" y="884" width="1" height="1"/><rect x="407" y="885" width="1" height="1"/><rect x="408" y="884" width="1" height="1"/><rect x="409" y="885" width="1" height="1"/><rect x="410" y="884" width="1" height="1"/><rect x="411" y="885" width="1" height="1"/></g>
<rect x="166" y="886" width="245" height="1" fill="#c0dcc0"/>
<rect x="166" y="887" width="245" height="2" fill="#a0a000"/>
<rect x="166" y="889" width="245" height="2" fill="#a6caf0"/>
<g fill="#000"><rect x="167" y="889" width="1" height="1"/><rect x="167" y="891" width="1" height="1"/><rect x="169" y="889" width="1" height="1"/><rect x="169" y="891" width="1" height="1"/><rect x="171" y="889" width="1" height="1"/><rect x="171" y="891" width="1" height="1"/><rect x="173" y="889" width="1" height="1"/><rect x="173" y="891" width="1" height="1"/><rect x="175" y="889" width="1" height="1"/><rect x="175" y="891" width="1" height="1"/><rect x="177" y="889" width="1" height="1"/><rect x="177" y="891" width="1" height="1"/><rect x="179" y="889" width="1" height="1"/><rect x="179" y="891" width="1" height="1"/><rect x="181" y="889" width="1" height="1"/><rect x="181" y="891" width="1" height="1"/><rect x="183" y="889" width="1" height="1"/><rect x="183" y="891" width="1" height="1"/><rect x="185" y="889" width="1" height="1"/><rect x="185" y="891" width="1" height="1"/><rect x="187" y="889" width="1" height="1"/><rect x="187" y="891" width="1" height="1"/><rect x="189" y="889" width="1" height="1"/><rect x="189" y="891" width="1" height="1"/><rect x="191" y="889" width="1" height="1"/><rect x="191" y="891" width="1" height="1"/><rect x="193" y="889" width="1" height="1"/><rect x="193" y="891" width="1" height="1"/><rect x="195" y="889" width="1" height="1"/><rect x="195" y="891" width="1" height="1"/><rect x="197" y="889" width="1" height="1"/><rect x="197" y="891" width="1" height="1"/><rect x="199" y="889" width="1" height="1"/><rect x="199" y="891" width="1" height="1"/><rect x="201" y="889" width="1" height="1"/><rect x="201" y="891" width="1" height="1"/><rect x="203" y="889" width="1" height="1"/><rect x="203" y="891" width="1" height="1"/><rect x="205" y="889" width="1" height="1"/><rect x="205" y="891" width="1" height="1"/><rect x="207" y="889" width="1" height="1"/><rect x="207" y="891" width="1" height="1"/><rect x="209" y="889" width="1" height="1"/><rect x="209" y="891" width="1" height="1"/><rect x="211" y="889" width="1" height="1"/><rect x="211" y="891" width="1" height="1"/><rect x="213" y="889" width="1" height="1"/><rect x="213" y="891" width="1" height="1"/><rect x="215" y="889" width="1" height="1"/><rect x="215" y="891" width="1" height="1"/><rect x="217" y="889" width="1" height="1"/><rect x="217" y="891" width="1" height="1"/><rect x="219" y="889" width="1" height="1"/><rect x="219" y="891" width="1" height="1"/><rect x="221" y="889" width="1" height="1"/><rect x="221" y="891" width="1" height="1"/><rect x="223" y="889" width="1" height="1"/><rect x="223" y="891" width="1" height="1"/><rect x="225" y="889" width="1" height="1"/><rect x="225" y="891" width="1" height="1"/><rect x="227" y="889" width="1" height="1"/><rect x="227" y="891" width="1" height="1"/><rect x="229" y="889" width="1" height="1"/><rect x="229" y="891" width="1" height="1"/><rect x="231" y="889" width="1" height="1"/><rect x="231" y="891" width="1" height="1"/><rect x="233" y="889" width="1" height="1"/><rect x="233" y="891" width="1" height="1"/><rect x="235" y="889" width="1" height="1"/><rect x="235" y="891" width="1" height="1"/><rect x="237" y="889" width="1" height="1"/><rect x="237" y="891" width="1" height="1"/><rect x="239" y="889" width="1" height="1"/><rect x="239" y="891" width="1" height="1"/><rect x="241" y="889" width="1" height="1"/><rect x="241" y="891" width="1" height="1"/><rect x="243" y="889" width="1" height="1"/><rect x="243" y="891" width="1" height="1"/><rect x="245" y="889" width="1" height="1"/><rect x="245" y="891" width="1" height="1"/><rect x="247" y="889" width="1" height="1"/><rect x="247" y="891" width="1" height="1"/><rect x="249" y="889" width="1" height="1"/><rect x="249" y="891" width="1" height="1"/><rect x="251" y="889" width="1" height="1"/><rect x="251" y="891" width="1" height="1"/><rect x="253" y="889" width="1" height="1"/><rect x="253" y="891" width="1" height="1"/><rect x="255" y="889" width="1" height="1"/><rect x="255" y="891" width="1" height="1"/><rect x="257" y="889" width="1" height="1"/><rect x="257" y="891" width="1" height="1"/><rect x="259" y="889" width="1" height="1"/><rect x="259" y="891" width="1" height="1"/><rect x="261" y="889" width="1" height="1"/><rect x="261" y="891" width="1" height="1"/><rect x="263" y="889" width="1" height="1"/><rect x="263" y="891" width="1" height="1"/><rect x="265" y="889" width="1" height="1"/><rect x="265" y="891" width="1" height="1"/><rect x="267" y="889" width="1" height="1"/><rect x="267" y="891" width="1" height="1"/><rect x="269" y="889" width="1" height="1"/><rect x="269" y="891" width="1" height="1"/><rect x="271" y="889" width="1" height="1"/><rect x="271" y="891" width="1" height="1"/><rect x="273" y="889" width="1" height="1"/><rect x="273" y="891" width="1" height="1"/><rect x="275" y="889" width="1" height="1"/><rect x="275" y="891" width="1" height="1"/><rect x="277" y="889" width="1" height="1"/><rect x="277" y="891" width="1" height="1"/><rect x="279" y="889" width="1" height="1"/><rect x="279" y="891" width="1" height="1"/><rect x="281" y="889" width="1" height="1"/><rect x="281" y="891" width="1" height="1"/><rect x="283" y="889" width="1" height="1"/><rect x="283" y="891" width="1" height="1"/><rect x="285" y="889" width="1" height="1"/><rect x="285" y="891" width="1" height="1"/><rect x="287" y="889" width="1" height="1"/><rect x="287" y="891" width="1" height="1"/><rect x="289" y="889" width="1" height="1"/><rect x="289" y="891" width="1" height="1"/><rect x="291" y="889" width="1" height="1"/><rect x="291" y="891" width="1" height="1"/><rect x="293" y="889" width="1" height="1"/><rect x="293" y="891" width="1" height="1"/><rect x="295" y="889" width="1" height="1"/><rect x="295" y="891" width="1" height="1"/><rect x="297" y="889" width="1" height="1"/><rect x="297" y="891" width="1" height="1"/><rect x="299" y="889" width="1" height="1"/><rect x="299" y="891" width="1" height="1"/><rect x="301" y="889" width="1" height="1"/><rect x="301" y="891" width="1" height="1"/><rect x="303" y="889" width="1" height="1"/><rect x="303" y="891" width="1" height="1"/><rect x="305" y="889" width="1" height="1"/><rect x="305" y="891" width="1" height="1"/><rect x="307" y="889" width="1" height="1"/><rect x="307" y="891" width="1" height="1"/><rect x="309" y="889" width="1" height="1"/><rect x="309" y="891" width="1" height="1"/><rect x="311" y="889" width="1" height="1"/><rect x="311" y="891" width="1" height="1"/><rect x="313" y="889" width="1" height="1"/><rect x="313" y="891" width="1" height="1"/><rect x="315" y="889" width="1" height="1"/><rect x="315" y="891" width="1" height="1"/><rect x="317" y="889" width="1" height="1"/><rect x="317" y="891" width="1" height="1"/><rect x="319" y="889" width="1" height="1"/><rect x="319" y="891" width="1" height="1"/><rect x="321" y="889" width="1" height="1"/><rect x="321" y="891" width="1" height="1"/><rect x="323" y="889" width="1" height="1"/><rect x="323" y="891" width="1" height="1"/><rect x="325" y="889" width="1" height="1"/><rect x="325" y="891" width="1" height="1"/><rect x="327" y="889" width="1" height="1"/><rect x="327" y="891" width="1" height="1"/><rect x="329" y="889" width="1" height="1"/><rect x="329" y="891" width="1" height="1"/><rect x="331" y="889" width="1" height="1"/><rect x="331" y="891" width="1" height="1"/><rect x="333" y="889" width="1" height="1"/><rect x="333" y="891" width="1" height="1"/><rect x="335" y="889" width="1" height="1"/><rect x="335" y="891" width="1" height="1"/><rect x="337" y="889" width="1" height="1"/><rect x="337" y="891" width="1" height="1"/><rect x="339" y="889" width="1" height="1"/><rect x="339" y="891" width="1" height="1"/><rect x="341" y="889" width="1" height="1"/><rect x="341" y="891" width="1" height="1"/><rect x="343" y="889" width="1" height="1"/><rect x="343" y="891" width="1" height="1"/><rect x="345" y="889" width="1" height="1"/><rect x="345" y="891" width="1" height="1"/><rect x="347" y="889" width="1" height="1"/><rect x="347" y="891" width="1" height="1"/><rect x="349" y="889" width="1" height="1"/><rect x="349" y="891" width="1" height="1"/><rect x="351" y="889" width="1" height="1"/><rect x="351" y="891" width="1" height="1"/><rect x="353" y="889" width="1" height="1"/><rect x="353" y="891" width="1" height="1"/><rect x="355" y="889" width="1" height="1"/><rect x="355" y="891" width="1" height="1"/><rect x="357" y="889" width="1" height="1"/><rect x="357" y="891" width="1" height="1"/><rect x="359" y="889" width="1" height="1"/><rect x="359" y="891" width="1" height="1"/><rect x="361" y="889" width="1" height="1"/><rect x="361" y="891" width="1" height="1"/><rect x="363" y="889" width="1" height="1"/><rect x="363" y="891" width="1" height="1"/><rect x="365" y="889" width="1" height="1"/><rect x="365" y="891" width="1" height="1"/><rect x="367" y="889" width="1" height="1"/><rect x="367" y="891" width="1" height="1"/><rect x="369" y="889" width="1" height="1"/><rect x="369" y="891" width="1" height="1"/><rect x="371" y="889" width="1" height="1"/><rect x="371" y="891" width="1" height="1"/><rect x="373" y="889" width="1" height="1"/><rect x="373" y="891" width="1" height="1"/><rect x="375" y="889" width="1" height="1"/><rect x="375" y="891" width="1" height="1"/><rect x="377" y="889" width="1" height="1"/><rect x="377" y="891" width="1" height="1"/><rect x="379" y="889" width="1" height="1"/><rect x="379" y="891" width="1" height="1"/><rect x="381" y="889" width="1" height="1"/><rect x="381" y="891" width="1" height="1"/><rect x="383" y="889" width="1" height="1"/><rect x="383" y="891" width="1" height="1"/><rect x="385" y="889" width="1" height="1"/><rect x="385" y="891" width="1" height="1"/><rect x="387" y="889" width="1" height="1"/><rect x="387" y="891" width="1" height="1"/><rect x="389" y="889" width="1" height="1"/><rect x="389" y="891" width="1" height="1"/><rect x="391" y="889" width="1" height="1"/><rect x="391" y="891" width="1" height="1"/><rect x="393" y="889" width="1" height="1"/><rect x="393" y="891" width="1" height="1"/><rect x="395" y="889" width="1" height="1"/><rect x="395" y="891" width="1" height="1"/><rect x="397" y="889" width="1" height="1"/><rect x="397" y="891" width="1" height="1"/><rect x="399" y="889" width="1" height="1"/><rect x="399" y="891" width="1" height="1"/><rect x="401" y="889" width="1" height="1"/><rect x="401" y="891" width="1" height="1"/><rect x="403" y="889" width="1" height="1"/><rect x="403" y="891" width="1" height="1"/><rect x="405" y="889" width="1" height="1"/><rect x="405" y="891" width="1" height="1"/><rect x="407" y="889" width="1" height="1"/><rect x="407" y="891" width="1" height="1"/><rect x="409" y="889" width="1" height="1"/><rect x="409" y="891" width="1" height="1"/></g>
<rect x="166" y="892" width="245" height="1" fill="#ff0000"/>
<rect x="166" y="893" width="245" height="8" fill="url(#chk)"/>
<g fill="#ff0000"><rect x="167" y="893" width="1" height="1"/><rect x="169" y="893" width="1" height="1"/><rect x="171" y="893" width="1" height="1"/><rect x="173" y="893" width="1" height="1"/><rect x="175" y="893" width="1" height="1"/><rect x="177" y="893" width="1" height="1"/><rect x="179" y="893" width="1" height="1"/><rect x="181" y="893" width="1" height="1"/><rect x="183" y="893" width="1" height="1"/><rect x="185" y="893" width="1" height="1"/><rect x="187" y="893" width="1" height="1"/><rect x="189" y="893" width="1" height="1"/><rect x="191" y="893" width="1" height="1"/><rect x="193" y="893" width="1" height="1"/><rect x="195" y="893" width="1" height="1"/><rect x="197" y="893" width="1" height="1"/><rect x="199" y="893" width="1" height="1"/><rect x="201" y="893" width="1" height="1"/><rect x="203" y="893" width="1" height="1"/><rect x="205" y="893" width="1" height="1"/><rect x="207" y="893" width="1" height="1"/><rect x="209" y="893" width="1" height="1"/><rect x="211" y="893" width="1" height="1"/><rect x="213" y="893" width="1" height="1"/><rect x="215" y="893" width="1" height="1"/><rect x="217" y="893" width="1" height="1"/><rect x="219" y="893" width="1" height="1"/><rect x="221" y="893" width="1" height="1"/><rect x="223" y="893" width="1" height="1"/><rect x="225" y="893" width="1" height="1"/><rect x="227" y="893" width="1" height="1"/><rect x="229" y="893" width="1" height="1"/><rect x="231" y="893" width="1" height="1"/><rect x="233" y="893" width="1" height="1"/><rect x="235" y="893" width="1" height="1"/><rect x="237" y="893" width="1" height="1"/><rect x="239" y="893" width="1" height="1"/><rect x="241" y="893" width="1" height="1"/><rect x="243" y="893" width="1" height="1"/><rect x="245" y="893" width="1" height="1"/><rect x="247" y="893" width="1" height="1"/><rect x="249" y="893" width="1" height="1"/><rect x="251" y="893" width="1" height="1"/><rect x="253" y="893" width="1" height="1"/><rect x="255" y="893" width="1" height="1"/><rect x="257" y="893" width="1" height="1"/><rect x="259" y="893" width="1" height="1"/><rect x="261" y="893" width="1" height="1"/><rect x="263" y="893" width="1" height="1"/><rect x="265" y="893" width="1" height="1"/><rect x="267" y="893" width="1" height="1"/><rect x="269" y="893" width="1" height="1"/><rect x="271" y="893" width="1" height="1"/><rect x="273" y="893" width="1" height="1"/><rect x="275" y="893" width="1" height="1"/><rect x="277" y="893" width="1" height="1"/><rect x="279" y="893" width="1" height="1"/><rect x="281" y="893" width="1" height="1"/><rect x="283" y="893" width="1" height="1"/><rect x="285" y="893" width="1" height="1"/><rect x="287" y="893" width="1" height="1"/><rect x="289" y="893" width="1" height="1"/><rect x="291" y="893" width="1" height="1"/><rect x="293" y="893" width="1" height="1"/><rect x="295" y="893" width="1" height="1"/><rect x="297" y="893" width="1" height="1"/><rect x="299" y="893" width="1" height="1"/><rect x="301" y="893" width="1" height="1"/><rect x="303" y="893" width="1" height="1"/><rect x="305" y="893" width="1" height="1"/><rect x="307" y="893" width="1" height="1"/><rect x="309" y="893" width="1" height="1"/><rect x="311" y="893" width="1" height="1"/><rect x="313" y="893" width="1" height="1"/><rect x="315" y="893" width="1" height="1"/><rect x="317" y="893" width="1" height="1"/><rect x="319" y="893" width="1" height="1"/><rect x="321" y="893" width="1" height="1"/><rect x="323" y="893" width="1" height="1"/><rect x="325" y="893" width="1" height="1"/><rect x="327" y="893" width="1" height="1"/><rect x="329" y="893" width="1" height="1"/><rect x="331" y="893" width="1" height="1"/><rect x="333" y="893" width="1" height="1"/><rect x="335" y="893" width="1" height="1"/><rect x="337" y="893" width="1" height="1"/><rect x="339" y="893" width="1" height="1"/><rect x="341" y="893" width="1" height="1"/><rect x="343" y="893" width="1" height="1"/><rect x="345" y="893" width="1" height="1"/><rect x="347" y="893" width="1" height="1"/><rect x="349" y="893" width="1" height="1"/><rect x="351" y="893" width="1" height="1"/><rect x="353" y="893" width="1" height="1"/><rect x="355" y="893" width="1" height="1"/><rect x="357" y="893" width="1" height="1"/><rect x="359" y="893" width="1" height="1"/><rect x="361" y="893" width="1" height="1"/><rect x="363" y="893" width="1" height="1"/><rect x="365" y="893" width="1" height="1"/><rect x="367" y="893" width="1" height="1"/><rect x="369" y="893" width="1" height="1"/><rect x="371" y="893" width="1" height="1"/><rect x="373" y="893" width="1" height="1"/><rect x="375" y="893" width="1" height="1"/><rect x="377" y="893" width="1" height="1"/><rect x="379" y="893" width="1" height="1"/><rect x="381" y="893" width="1" height="1"/><rect x="383" y="893" width="1" height="1"/><rect x="385" y="893" width="1" height="1"/><rect x="387" y="893" width="1" height="1"/><rect x="389" y="893" width="1" height="1"/><rect x="391" y="893" width="1" height="1"/><rect x="393" y="893" width="1" height="1"/><rect x="395" y="893" width="1" height="1"/><rect x="397" y="893" width="1" height="1"/><rect x="399" y="893" width="1" height="1"/><rect x="401" y="893" width="1" height="1"/><rect x="403" y="893" width="1" height="1"/><rect x="405" y="893" width="1" height="1"/><rect x="407" y="893" width="1" height="1"/><rect x="409" y="893" width="1" height="1"/></g>
</g>
<g>
<rect x="288" y="340" width="2" height="2" fill="#00a000"/>
<rect x="291" y="340" width="2" height="2" fill="#00a000"/>
<rect x="288" y="342" width="5" height="1" fill="#c00000"/>
<rect x="290" y="345" width="1" height="1" fill="#0000ff"/>
<rect x="290" y="346" width="1" height="1" fill="#ffb080"/>
<rect x="288" y="347" width="1" height="1" fill="#f0c000"/>
<rect x="289" y="348" width="1" height="1" fill="#f0c000"/>
<rect x="291" y="347" width="1" height="1" fill="#f0c000"/>
<rect x="292" y="348" width="1" height="1" fill="#f0c000"/>
<rect x="288" y="349" width="5" height="1" fill="#c00000"/>
<rect x="288" y="352" width="2" height="1" fill="#00a000"/>
<rect x="290" y="352" width="3" height="1" fill="#20c0f0"/>
<rect x="288" y="363" width="4" height="1" fill="#00a000"/>
<rect x="288" y="364" width="5" height="2" fill="#c00000"/>
<rect x="292" y="368" width="1" height="1" fill="#0000ff"/>
<rect x="292" y="369" width="1" height="1" fill="#ff80a0"/>
<rect x="288" y="371" width="1" height="1" fill="#d0d000"/>
<rect x="289" y="370" width="1" height="1" fill="#d0d000"/>
<rect x="290" y="371" width="1" height="1" fill="#d0d000"/>
<rect x="291" y="370" width="1" height="1" fill="#d0d000"/>
<rect x="288" y="372" width="5" height="1" fill="#c00000"/>
<rect x="288" y="375" width="2" height="1" fill="#a09070"/>
<rect x="290" y="375" width="3" height="1" fill="#208060"/>
</g>
<path d="M252.5 485L289.5 584M289.5 584L326.5 484M201.5 559L191.5 586L176 618M375.5 560L384.5 586L401 618" stroke="#ffc890" stroke-width="1" stroke-dasharray="1 1.6" fill="none" shape-rendering="auto" opacity="0.85"/>
<rect x="401" y="617" width="10" height="1" fill="#20a020"/>
<rect x="166" y="617" width="10" height="1" fill="#20a020"/>
<rect x="165" y="125" width="688" height="1" fill="#c8c8c8"/>
<rect x="484" y="96" width="1" height="805" fill="#c8c8c8"/>
</svg>
<div class="ab" style="left:165px;top:901px;width:688px;height:2px;background:#8a8a8a"></div>
<div class="ab" style="left:165px;top:903px;width:688px;height:34px;background:#f0f0f0"></div>
<div class="ab" style="left:182px;top:911px;width:671px;height:2px;background:#787878"></div>
<div class="ab" style="left:163px;top:96px;width:2px;height:841px;background:linear-gradient(90deg,#9a9a9a,#555)"></div>
<div class="ab" style="left:146px;top:936px;width:707px;height:2px;background:#f4f4f8"></div>
<svg class="ab" style="left:0;top:0" width="853" height="940">
<path d="M165 920.5H232" stroke="#6a6a6a" stroke-width="1"/>
<g fill="#303030"><rect x="168" y="924" width="1.3" height="9"/><path d="M175 924L169.5 928.5L175 933Z"/><path d="M190 924L184.5 928.5L190 933Z"/><path d="M203 924L208.5 928.5L203 933Z"/><path d="M217 924L222.5 928.5L217 933Z"/><rect x="223" y="924" width="1.3" height="9"/></g>
<path d="M825 920.5L833 936.5H892L900 920.5Z" fill="#ececec" stroke="#555" stroke-width="1" stroke-dasharray="none"/>
<path d="M738 920.5L746 936.5H821L829 920.5Z" fill="#ececec" stroke="#555" stroke-width="1" stroke-dasharray="none"/>
<path d="M648 920.5L656 936.5H735L743 920.5Z" fill="#ececec" stroke="#555" stroke-width="1" stroke-dasharray="none"/>
<path d="M517 920.5L525 936.5H646L654 920.5Z" fill="#ececec" stroke="#555" stroke-width="1" stroke-dasharray="none"/>
<path d="M432 920.5L440 936.5H515L523 920.5Z" fill="#ececec" stroke="#555" stroke-width="1" stroke-dasharray="none"/>
<path d="M369 920.5L377 936.5H432L440 920.5Z" fill="#ececec" stroke="#555" stroke-width="1" stroke-dasharray="none"/>
<path d="M292 920.5L300 936.5H369L377 920.5Z" fill="#ececec" stroke="#555" stroke-width="1" stroke-dasharray="none"/>
<path d="M232 920.5L240 936.5H292L300 920.5Z" fill="#ffffff" stroke="#555" stroke-width="1" stroke-dasharray="none"/>
<path d="M233 920.5H299" stroke="#fff" stroke-width="1.2"/>
</svg>
<div class="t" style="left:241px;top:923px;font-size:11.0px;font-weight:bold;color:#ff0000">Knit view</div>
<div class="t" style="left:303.5px;top:923px;font-size:11.39px;color:#10103a">Intarsia view</div>
<div class="t" style="left:380.5px;top:923px;font-size:10.97px;color:#10103a">JQD View</div>
<div class="t" style="left:442.5px;top:923px;font-size:10.8px;color:#10103a">JQD area map</div>
<div class="t" style="left:527.5px;top:923px;font-size:11.35px;color:#10103a">JQD yarn feeder group</div>
<div class="t" style="left:658px;top:923px;font-size:11.7px;color:#10103a">Stitch drawing</div>
<div class="t" style="left:748px;top:923px;font-size:11.23px;color:#10103a">AddYarn View</div>
<div class="t" style="left:836px;top:923px;font-size:11.3px;color:#10103a">PAT</div>
<div class="ab" style="left:0;top:939px;width:853px;height:6px;background:#ebedf9"></div>
<div class="ab" style="left:0;top:945px;width:853px;height:18px;background:linear-gradient(#bccbdb,#dfe7f0)"></div>
<div class="t" style="left:4px;top:949px;font-size:11.5px;color:#1b1b1b">Color</div>
<div class="ab" style="left:0;top:963px;width:853px;height:1px;background:#a0a4ac"></div>
<div class="ab" style="left:0;top:964px;width:853px;height:44px;background:#f3f5fb"></div>
<div class="ab" style="left:6px;top:968px;width:31px;height:32px;box-sizing:border-box;background:#bcdaf3;border:1px solid #3d8ee0"></div>
<div class="ab" style="left:38px;top:968px;width:13px;height:15px;background:#eaeaea"></div>
<div class="ab" style="left:38px;top:985px;width:13px;height:15px;background:#eaeaea"></div>
<div class="ab" style="left:68px;top:969px;width:27px;height:31px;box-sizing:border-box;background:#fafafa;border:1px solid #d0d0d0"></div>
<div class="ab" style="left:81px;top:970px;width:1px;height:29px;background:#c8c8c8"></div>
<svg class="ab" style="left:0;top:0" width="853" height="1008">
<path d="M41.5 978.5L44.5 975L47.5 978.5Z M41.5 989.5L44.5 993L47.5 989.5Z M76.5 980L73.5 983.5L76.5 987Z M87.5 980L90.5 983.5L87.5 987Z" fill="#202020"/>
<rect x="12" y="974" width="20" height="20" fill="#0000cc"/>
<path d="M16 978L28 990M28 978L16 990" stroke="#d8d8d8" stroke-width="2"/>
<rect x="613.5" y="968.5" width="31" height="31" fill="#cde4f7" stroke="#3d8ee0"/>
<rect x="107" y="974" width="20" height="20" fill="#000000"/>

<rect x="139" y="974" width="20" height="20" fill="#800000"/>
<path d="M142 979H156M149 979V982" stroke="#d0d0d0" stroke-width="1.6" fill="none"/><circle cx="149" cy="986" r="3.5" stroke="#d0d0d0" stroke-width="1.6" fill="none"/>
<rect x="171" y="974" width="20" height="20" fill="#008000"/>
<circle cx="181" cy="982" r="3.5" stroke="#d0d0d0" stroke-width="1.6" fill="none"/><path d="M181 985.5V989M174 989H188" stroke="#d0d0d0" stroke-width="1.6" fill="none"/>
<rect x="203" y="974" width="20" height="20" fill="#808000"/>
<circle cx="215" cy="980" r="3" stroke="#d0d0d0" stroke-width="1.6" fill="none"/><circle cx="211" cy="988" r="3" stroke="#d0d0d0" stroke-width="1.6" fill="none"/><path d="M206 984H220" stroke="#d0d0d0" stroke-width="1.6" fill="none"/>
<rect x="235" y="974" width="20" height="20" fill="#000080"/>
<path d="M238 979L245 989L252 979" stroke="#d0d0d0" stroke-width="1.6" fill="none"/>
<rect x="267" y="974" width="20" height="20" fill="#800080"/>
<path d="M270 989L277 979L284 989" stroke="#d0d0d0" stroke-width="1.6" fill="none"/>
<rect x="299" y="974" width="20" height="20" fill="#008080"/>
<circle cx="306" cy="987" r="3" stroke="#d0d0d0" stroke-width="1.6" fill="none"/><path d="M302 987H309L312 980L316 986" stroke="#d0d0d0" stroke-width="1.6" fill="none"/>
<rect x="331" y="974" width="20" height="20" fill="#c0c0c0"/>
<path d="M334 984L338 989L342 981" stroke="#303030" stroke-width="1.6" fill="none"/><circle cx="344" cy="980" r="3" stroke="#303030" stroke-width="1.6" fill="none"/>
<rect x="363" y="974" width="20" height="20" fill="#c0dcc0"/>
<circle cx="372" cy="988" r="3" stroke="#303030" stroke-width="1.4" fill="none"/><path d="M366 984H378M372 976V982M370 978L372 976L374 978M377 976L381 980M381 976L377 980" stroke="#303030" stroke-width="1.2" fill="none"/>
<rect x="395" y="974" width="20" height="20" fill="#a6caf0"/>
<circle cx="404" cy="979" r="3" stroke="#303030" stroke-width="1.4" fill="none"/><path d="M398 984H410M404 985V991M402 989L404 991L406 989M409 987L413 991M413 987L409 991" stroke="#303030" stroke-width="1.2" fill="none"/>
<rect x="427" y="974" width="20" height="20" fill="#e00000"/>
<circle cx="439" cy="980" r="3" stroke="#d0d0d0" stroke-width="1.6" fill="none"/><circle cx="435" cy="988" r="3" stroke="#d0d0d0" stroke-width="1.6" fill="none"/><path d="M430 984H444" stroke="#d0d0d0" stroke-width="1.6" fill="none"/>
<rect x="459" y="974" width="20" height="20" fill="#e8e000"/>
<circle cx="469" cy="980" r="2.5" stroke="#303030" stroke-width="1.2" fill="none"/><path d="M464 977H474" stroke="#303030" stroke-width="1"/><text x="469" y="992" font-size="6.5" text-anchor="middle" fill="#303030" font-family="Liberation Sans">F-2ND</text>
<rect x="491" y="974" width="20" height="20" fill="#00e0e0"/>
<circle cx="501" cy="980" r="2.5" stroke="#303030" stroke-width="1.2" fill="none"/><path d="M496 977H506" stroke="#303030" stroke-width="1"/><text x="501" y="992" font-size="6.5" text-anchor="middle" fill="#303030" font-family="Liberation Sans">B-2ND</text>
<rect x="523" y="974" width="20" height="20" fill="#00e000"/>
<circle cx="533" cy="980" r="2.5" stroke="#303030" stroke-width="1.2" fill="none"/><path d="M528 977H538" stroke="#303030" stroke-width="1"/><text x="533" y="992" font-size="6.5" text-anchor="middle" fill="#303030" font-family="Liberation Sans">FB2ND</text>
<rect x="555" y="974" width="20" height="20" fill="#c0c000"/>
<path d="M557 985L561 989L568 978L573 984" stroke="#303030" stroke-width="1.8" fill="none"/>
<rect x="587" y="974" width="20" height="20" fill="#00c0c0"/>
<circle cx="597" cy="986" r="3.5" stroke="#303030" stroke-width="1.6" fill="none"/><path d="M590 982H604M601 988L605 992M605 988L601 992" stroke="#303030" stroke-width="1.4" fill="none"/>
<rect x="619" y="974" width="20" height="20" fill="#0000e0"/>
<path d="M623 978L635 990M635 978L623 990" stroke="#e0e0e0" stroke-width="2" fill="none"/>
<rect x="651" y="974" width="20" height="20" fill="#a0a000"/>
<circle cx="661" cy="982" r="3.5" stroke="#d0d0d0" stroke-width="1.6" fill="none"/><path d="M654 986H668M665 976L669 979" stroke="#d0d0d0" stroke-width="1.6" fill="none"/>
<rect x="683" y="974" width="20" height="20" fill="#00a0a0"/>
<g fill="#e8e8e8"><rect x="692" y="976" width="2" height="16"/><rect x="688" y="979" width="2" height="2"/><rect x="696" y="979" width="2" height="2"/><rect x="688" y="984" width="2" height="2"/><rect x="696" y="984" width="2" height="2"/><rect x="689" y="989" width="2" height="2"/><rect x="695" y="989" width="2" height="2"/></g>
<rect x="715" y="974" width="20" height="20" fill="#a000a0"/>
<g fill="#e8e8e8"><rect x="724" y="976" width="2" height="16"/><rect x="720" y="979" width="2" height="2"/><rect x="728" y="979" width="2" height="2"/><rect x="720" y="984" width="2" height="2"/><rect x="728" y="984" width="2" height="2"/><rect x="721" y="989" width="2" height="2"/><rect x="727" y="989" width="2" height="2"/></g>
<rect x="747" y="974" width="20" height="20" fill="#a00000"/>
<path d="M749 979H757M753 979V982M762 990V978M759 981L762 978L765 981" stroke="#e8e8e8" stroke-width="1.5" fill="none"/><circle cx="753" cy="986" r="3" stroke="#e8e8e8" stroke-width="1.5" fill="none"/>
<rect x="779" y="974" width="20" height="20" fill="#e8a000"/>
<path d="M783 977L792 986M783 977V982M783 977H788" stroke="#202020" stroke-width="1.8" fill="none"/><text x="791" y="992" font-size="7" text-anchor="middle" fill="#202020" font-family="Liberation Sans">1P</text>
<rect x="811" y="974" width="20" height="20" fill="#00d0a0"/>
<path d="M815 977L824 986M815 977V982M815 977H820" stroke="#202020" stroke-width="1.8" fill="none"/><text x="823" y="992" font-size="7" text-anchor="middle" fill="#202020" font-family="Liberation Sans">2P</text>
<rect x="843" y="974" width="20" height="20" fill="#a000e0"/>
<path d="M847 977L856 986" stroke="#e0e0e0" stroke-width="1.8"/>
</svg>
<div class="t" style="left:7px;width:31px;text-align:center;top:999px;font-size:12px;color:#1b1b1b">16</div>
<div class="t" style="left:101px;width:32px;text-align:center;top:999px;font-size:12px;color:#1b1b1b">0</div>
<div class="t" style="left:133px;width:32px;text-align:center;top:999px;font-size:12px;color:#1b1b1b">1</div>
<div class="t" style="left:165px;width:32px;text-align:center;top:999px;font-size:12px;color:#1b1b1b">2</div>
<div class="t" style="left:197px;width:32px;text-align:center;top:999px;font-size:12px;color:#1b1b1b">3</div>
<div class="t" style="left:229px;width:32px;text-align:center;top:999px;font-size:12px;color:#1b1b1b">4</div>
<div class="t" style="left:261px;width:32px;text-align:center;top:999px;font-size:12px;color:#1b1b1b">5</div>
<div class="t" style="left:293px;width:32px;text-align:center;top:999px;font-size:12px;color:#1b1b1b">6</div>
<div class="t" style="left:325px;width:32px;text-align:center;top:999px;font-size:12px;color:#1b1b1b">7</div>
<div class="t" style="left:357px;width:32px;text-align:center;top:999px;font-size:12px;color:#1b1b1b">8</div>
<div class="t" style="left:389px;width:32px;text-align:center;top:999px;font-size:12px;color:#1b1b1b">9</div>
<div class="t" style="left:421px;width:32px;text-align:center;top:999px;font-size:12px;color:#1b1b1b">10</div>
<div class="t" style="left:453px;width:32px;text-align:center;top:999px;font-size:12px;color:#1b1b1b">11</div>
<div class="t" style="left:485px;width:32px;text-align:center;top:999px;font-size:12px;color:#1b1b1b">12</div>
<div class="t" style="left:517px;width:32px;text-align:center;top:999px;font-size:12px;color:#1b1b1b">13</div>
<div class="t" style="left:549px;width:32px;text-align:center;top:999px;font-size:12px;color:#1b1b1b">14</div>
<div class="t" style="left:581px;width:32px;text-align:center;top:999px;font-size:12px;color:#1b1b1b">15</div>
<div class="t" style="left:613px;width:32px;text-align:center;top:999px;font-size:12px;color:#1b1b1b">16</div>
<div class="t" style="left:645px;width:32px;text-align:center;top:999px;font-size:12px;color:#1b1b1b">17</div>
<div class="t" style="left:677px;width:32px;text-align:center;top:999px;font-size:12px;color:#1b1b1b">18</div>
<div class="t" style="left:709px;width:32px;text-align:center;top:999px;font-size:12px;color:#1b1b1b">19</div>
<div class="t" style="left:741px;width:32px;text-align:center;top:999px;font-size:12px;color:#1b1b1b">20</div>
<div class="t" style="left:773px;width:32px;text-align:center;top:999px;font-size:12px;color:#1b1b1b">21</div>
<div class="t" style="left:805px;width:32px;text-align:center;top:999px;font-size:12px;color:#1b1b1b">22</div>
<div class="t" style="left:837px;width:32px;text-align:center;top:999px;font-size:12px;color:#1b1b1b">23</div>
<div class="t" style="left:254px;top:201px;font-size:26px;font-weight:bold;color:#000;-webkit-text-stroke:1px #000;transform-origin:0 0;transform:skewX(-8deg) scaleX(1.031)">jacquardprogrammer.com</div>
<div class="t" style="left:254px;top:485px;font-size:26px;font-weight:bold;color:#000;-webkit-text-stroke:1px #000;transform-origin:0 0;transform:skewX(-8deg) scaleX(1.031)">jacquardprogrammer.com</div>
<div class="t" style="left:254px;top:768px;font-size:26px;font-weight:bold;color:#000;-webkit-text-stroke:1px #000;transform-origin:0 0;transform:skewX(-8deg) scaleX(1.031)">jacquardprogrammer.com</div>
<div class="t" style="left:106px;top:647px;font-size:26px;font-weight:bold;color:#000;-webkit-text-stroke:1px #000;transform-origin:0 0;transform:rotate(-89.4deg) skewX(-8deg) scaleX(1.036)">jacquardprogrammer.com</div>
</body></html>
